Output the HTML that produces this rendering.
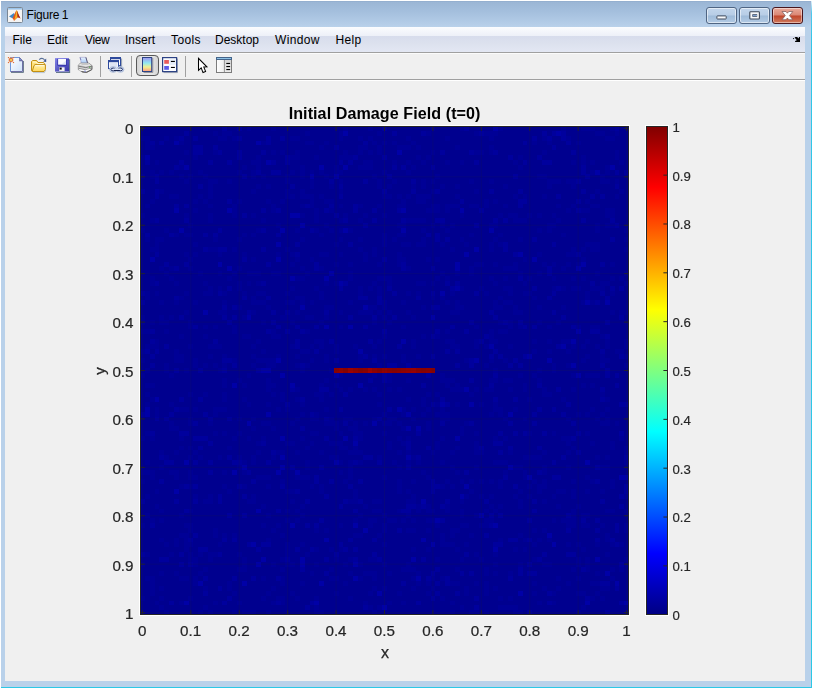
<!DOCTYPE html>
<html><head><meta charset="utf-8"><title>Figure 1</title>
<style>
html,body{margin:0;padding:0;background:#fff;}
body{width:813px;height:689px;position:relative;overflow:hidden;font-family:"Liberation Sans",sans-serif;}
.a{position:absolute;}
#frame{left:1px;top:1px;width:811px;height:687px;background:#b9d1ea;}
#cy-r{left:811px;top:1px;width:1px;height:687px;background:linear-gradient(#e4f1fa 0,#a8dcf2 5px,#4fc8ec 12px,#32c6e8 40px,#2cc8e6 100%);}
#cy-b{left:1px;top:687px;width:811px;height:1px;background:#2cc8e6;}
#title{left:1px;top:1px;width:810px;height:26px;background:linear-gradient(#8faacb 0,#9bb6d5 1.2px,#a4bfdd 40%,#b3cce7 85%,#b9d1ea 100%);}
#ttext{left:26.5px;top:6px;letter-spacing:-0.2px;word-spacing:-0.8px;font-size:12px;line-height:18px;color:#000;white-space:nowrap;}
#menu{left:5px;top:27px;width:800px;height:25px;background:linear-gradient(#fbfcfe 0,#edf0f8 9px,#d7dcec 9px,#dce1ee 16px,#e3e7f3 25px);}
.mi{position:absolute;top:31px;font-size:12px;line-height:18px;color:#000;white-space:nowrap;}
#l1{left:5px;top:52px;width:800px;height:1px;background:#a0a0a0;}
#tool{left:5px;top:53px;width:800px;height:26px;background:linear-gradient(#fbfbfb 0,#fbfbfb 1px,#f0f0f0 1px);}
#l2{left:5px;top:79px;width:800px;height:1px;background:#a0a0a0;}
#l3{left:5px;top:80px;width:800px;height:1px;background:#ffffff;}
#content{left:5px;top:81px;width:800px;height:600px;background:#f0f0f0;}
.btn{position:absolute;top:7px;height:17px;box-sizing:border-box;border:1px solid #4f6583;border-radius:3px;}
.xt{-webkit-text-stroke:0.22px #262626;position:absolute;top:622px;width:40px;text-align:center;font-size:15.2px;line-height:18px;color:#262626;}
.yt{-webkit-text-stroke:0.22px #262626;position:absolute;left:83.5px;width:50px;text-align:right;font-size:15.2px;line-height:18px;color:#262626;}
.ct{-webkit-text-stroke:0.18px #262626;position:absolute;left:672.5px;font-size:13.2px;line-height:16px;color:#262626;}
.sep{position:absolute;top:56px;width:1px;height:21px;background:#a0a0a0;}
</style></head><body>
<div class="a" id="frame"></div>
<div class="a" id="cy-r"></div>
<div class="a" id="cy-b"></div>
<div class="a" id="title"></div>

<!-- matlab icon -->
<svg class="a" style="left:7px;top:7px" width="16" height="16" viewBox="0 0 16 16">
<rect x="0.5" y="0.5" width="15" height="15" rx="1" fill="#f4f4f4" stroke="#7b8794"/>
<rect x="1" y="1" width="14" height="1.6" fill="#9cc4ea"/>
<path d="M2 9.5 L7 6 L8.5 9.8 L5.5 11.2z" fill="#3f86c4"/>
<path d="M5.5 11.2 L8 6 Q9.5 2.5 10.2 4 Q11.5 8 13.5 11.5 Q11.5 10 10.5 10.5 Q8.5 12 7 14 Q6.5 12 5.5 11.2z" fill="#e0561a"/>
<path d="M9.4 3.6 Q10 3 10.3 4.4 L10.6 9.8 Q9 11.5 7.2 13.6 Q8.6 9 9.4 3.6z" fill="#f6b01f"/>
<path d="M10.2 4 Q11.5 8 13.5 11.5 Q11.8 10.2 10.6 10.4z" fill="#a6281b"/>
</svg>
<div class="a" id="ttext">Figure 1</div>

<!-- caption buttons -->
<div class="btn" style="left:706px;width:31px;background:linear-gradient(#c3d6ec 0,#b7cde6 48%,#9fbbd9 52%,#b3cbe5 100%);box-shadow:inset 0 0 0 1px rgba(255,255,255,.55);"></div>
<div class="btn" style="left:739px;width:31px;background:linear-gradient(#c3d6ec 0,#b7cde6 48%,#9fbbd9 52%,#b3cbe5 100%);box-shadow:inset 0 0 0 1px rgba(255,255,255,.55);"></div>
<div class="btn" style="left:772px;width:31px;border-color:#48151c;background:linear-gradient(#e9aa9b 0,#da8674 48%,#c1452b 52%,#d07a5c 100%);box-shadow:inset 0 0 0 1px rgba(255,255,255,.45);"></div>
<svg class="a" style="left:706px;top:7px" width="97" height="17" viewBox="0 0 97 17">
<rect x="10.9" y="8.9" width="9.3" height="3.1" rx="0.6" fill="#f6f8fb" stroke="#414b5c" stroke-width="1"/>
<rect x="43.8" y="4.8" width="9.6" height="7.2" rx="0.8" fill="#f6f8fb" stroke="#3e4858" stroke-width="1.1"/>
<rect x="46.7" y="7.6" width="4.1" height="1.8" fill="#7c9fd0" stroke="#4c586a" stroke-width="0.8"/>
<path d="M76 4.5h4l1.4 1.7l1.4-1.7h4l-3.3 4.1l3.3 4.1h-4l-1.4-1.7l-1.4 1.7h-4l3.3-4.1z" fill="#ffffff" stroke="#7a5656" stroke-width="0.7" stroke-linejoin="round"/>
</svg>

<!-- menu -->
<div class="a" id="menu"></div>
<div class="mi" style="left:12.5px">File</div>
<div class="mi" style="left:47px">Edit</div>
<div class="mi" style="left:85px;letter-spacing:-0.4px">View</div>
<div class="mi" style="left:125px">Insert</div>
<div class="mi" style="left:171px;letter-spacing:0.4px">Tools</div>
<div class="mi" style="left:215px">Desktop</div>
<div class="mi" style="left:275px;letter-spacing:0.35px">Window</div>
<div class="mi" style="left:335.5px;letter-spacing:0.3px">Help</div>
<svg class="a" style="left:792px;top:36px" width="9" height="7" viewBox="792 36 9 7"><path d="M792.8 38.6L793.6 37.9L794.4 38.6L793.6 39.3z M794.6 37.6L795.6 36.9H797.2L798.5 38.4L799.1 37H800V42H795.1V41L796.8 40.2L795.6 38.7z" fill="#000"/></svg>
<div class="a" id="l1"></div>
<div class="a" id="tool"></div>
<div class="a" id="l2"></div>
<div class="a" id="l3"></div>
<div class="a" id="content"></div>

<!--TOOLBAR-->
<svg class="a" style="left:5px;top:53px" width="240" height="26" viewBox="5 53 240 26">
<defs>
<linearGradient id="pg" x1="0" y1="0" x2="1" y2="1"><stop offset="0" stop-color="#ffffff"/><stop offset="1" stop-color="#cfe2fa"/></linearGradient>
<linearGradient id="fo" x1="0" y1="0" x2="0" y2="1"><stop offset="0" stop-color="#fff3b0"/><stop offset="1" stop-color="#ffd65a"/></linearGradient>
<linearGradient id="fl" x1="0" y1="0" x2="1" y2="1"><stop offset="0" stop-color="#8484e6"/><stop offset="1" stop-color="#3434a8"/></linearGradient>
<linearGradient id="cbi" x1="0" y1="0" x2="0" y2="1"><stop offset="0" stop-color="#a094f2"/><stop offset="0.4" stop-color="#90e8f2"/><stop offset="0.68" stop-color="#f2f090"/><stop offset="1" stop-color="#ff9a80"/></linearGradient>
<linearGradient id="pp" x1="0" y1="0" x2="1" y2="0"><stop offset="0" stop-color="#ffffff"/><stop offset="1" stop-color="#dcdcdc"/></linearGradient>
<linearGradient id="ppr" x1="0" y1="0" x2="0" y2="1"><stop offset="0" stop-color="#e8f2ff"/><stop offset="1" stop-color="#a8ccf6"/></linearGradient>
<linearGradient id="pb" x1="0" y1="0" x2="0" y2="1"><stop offset="0" stop-color="#d4d4d4"/><stop offset="1" stop-color="#ececec"/></linearGradient>
<linearGradient id="prs" x1="0" y1="0" x2="1" y2="0"><stop offset="0" stop-color="#d2d2d2"/><stop offset="0.3" stop-color="#e6e6e6"/><stop offset="0.7" stop-color="#e6e6e6"/><stop offset="1" stop-color="#d2d2d2"/></linearGradient>
</defs>
<!-- new -->
<path d="M11 72.5H23.5V61" fill="none" stroke="#6f8090"/>
<path d="M10.5 57.5H19.5L22.5 60.8V71.5H10.5z" fill="url(#pg)" stroke="#6e6ea6"/>
<path d="M10.5 71.5V57.5H19.5" fill="none" stroke="#6f96da"/>
<path d="M19.2 57.3L23 61.2H19.2z" fill="#6868a2"/>
<circle cx="20.3" cy="59.6" r="0.6" fill="#7fa6e0"/>
<g fill="#e2703a"><circle cx="11" cy="59.9" r="2.7" fill="#f0a070" opacity="0.55"/><circle cx="11" cy="59.9" r="2.1"/>
<rect x="7.9" y="57" width="1.1" height="1.1"/><rect x="13" y="57" width="1.1" height="1.1"/><rect x="7.9" y="62" width="1.1" height="1.1"/><rect x="13" y="62" width="1.1" height="1.1"/></g>
<rect x="10.2" y="59.1" width="1.7" height="1.7" fill="#e8ee62"/>
<!-- open -->
<path d="M33 72.6H44.5L45.8 70" fill="none" stroke="#9fb0c4" stroke-opacity="0.7"/>
<path d="M31.5 70.8V61.5L32.8 60.5H36.6L38 62.5H43.6L44.5 63.6V66" fill="#ffe27a" stroke="#c28f12"/>
<path d="M32.6 62h3.6l1.3 1.6h5.8" fill="none" stroke="#fffbe8" stroke-width="0.9"/>
<path d="M32.2 71.5L34 65.5L35 64.6H45.4V69.5L44 71.5z" fill="url(#fo)" stroke="#c28f12" stroke-linejoin="round"/>
<path d="M35.2 65.7H44.3" stroke="#fffdf0" stroke-width="0.9" fill="none"/>
<path d="M39.2 59.6Q42 57 44.6 59.8" fill="none" stroke="#5a7098" stroke-width="1.1"/>
<path d="M43.2 61.6L46.2 58.6V61.9z" fill="#3c5690"/>
<!-- save -->
<path d="M56 72.5H69.6V59.2" fill="none" stroke="#64788c" stroke-width="1.1"/>
<rect x="55" y="58" width="14" height="13.6" fill="url(#fl)"/>
<rect x="55" y="58" width="14" height="0.8" fill="#9a9af0" opacity="0.7"/>
<rect x="58" y="59" width="8" height="5.8" fill="#fbfcff"/>
<path d="M66 60.5V64.8H61z" fill="#dfe8f6"/>
<rect x="57.3" y="58.8" width="0.8" height="6.4" fill="#3838b0"/><rect x="66" y="58.8" width="0.8" height="6.4" fill="#3838b0"/><rect x="57.6" y="64.8" width="9" height="0.9" fill="#3030a4"/>
<rect x="59.2" y="67.3" width="5.4" height="3.8" fill="#f4f4f4"/>
<rect x="59.6" y="67.6" width="2.1" height="2" fill="#101018"/>
<rect x="67.6" y="59.2" width="0.9" height="1.2" fill="#2c2c88"/>
<!-- print -->
<path d="M80.2 57.3H85.8L87.4 63H81.2z" fill="url(#ppr)" stroke="#8c8cc0" stroke-width="0.5"/>
<path d="M85.9 57.3L87.6 63" stroke="#505070" stroke-width="0.9" fill="none"/>
<path d="M80 57.4L80.9 60" stroke="#7070b0" stroke-width="0.8" fill="none"/>
<path d="M78.3 65.4L80.3 63.1H88.8L92 65.6V69.4L86.8 72.4H83L78.3 69.6z" fill="#c4c4c4" stroke="#8a8a8a" stroke-width="0.8"/>
<path d="M78.8 65L80.6 63.4H88.6L91.4 65.4L86 66.6z" fill="#e6e6e6"/>
<path d="M81.5 64.3H88.5" stroke="#b8b8b8" stroke-width="0.8" fill="none"/>
<path d="M78.6 66.2L85.8 67.6L91.8 66.2" fill="none" stroke="#7e7e7e" stroke-width="1"/>
<path d="M78.8 67.4L85.8 68.8L91.6 67.4" fill="none" stroke="#d6d6d6" stroke-width="0.9"/>
<path d="M78.8 68.4L85.4 69.8L91.6 68.2" fill="none" stroke="#8c8c8c" stroke-width="0.9"/>
<path d="M79.2 69.6L84.8 71L90.6 69.4" fill="none" stroke="#fbfbfb" stroke-width="1.3"/>
<path d="M81.6 71.6L86.6 72.3L91.8 69.6" fill="none" stroke="#565656" stroke-width="1"/>
<path d="M91.9 65.8V69.4" stroke="#6c6c6c" stroke-width="0.9" fill="none"/>
<rect x="89.2" y="66.6" width="1.1" height="1.3" fill="#4caa44"/>
<rect x="84.3" y="70.6" width="1.6" height="1" fill="#7c84d8"/>
<!-- link -->
<path d="M121.6 58.5V66.4H119.5" fill="none" stroke="#8a96a8" stroke-width="0.9"/>
<rect x="110.5" y="58" width="10" height="7.6" fill="#fdfdff" stroke="#2e4a9c"/>
<rect x="110" y="57" width="11" height="2.2" fill="#2e4a9c"/>
<rect x="108.5" y="61" width="10" height="7.6" fill="#f4f7fd" stroke="#2e4a9c"/>
<rect x="108" y="60" width="11" height="2.2" fill="#2e4a9c"/>
<rect x="110" y="63" width="7" height="4" fill="#dfe6f4"/>
<ellipse cx="113.2" cy="69.5" rx="3.7" ry="2.9" fill="#c9d6ec" stroke="#93a5c6" stroke-width="0.5"/>
<ellipse cx="120.3" cy="69.4" rx="3.7" ry="2.9" fill="#c9d6ec" stroke="#93a5c6" stroke-width="0.5"/>
<ellipse cx="113.2" cy="69.5" rx="2.2" ry="1.4" fill="#dfe8f8" stroke="#1e2c60" stroke-width="1"/>
<ellipse cx="120.3" cy="69.4" rx="2.2" ry="1.4" fill="#dfe8f8" stroke="#1e2c60" stroke-width="1"/>
<rect x="113.6" y="68.5" width="6.2" height="1.5" fill="#e4edfc"/>
<path d="M114 70.5H119.6" stroke="#16224c" stroke-width="1.1"/>
<!-- colorbar pressed button -->
<rect x="136.5" y="55.5" width="22" height="20" rx="3.6" fill="url(#prs)" stroke="#585858"/>
<path d="M143.5 72.5H152.8V58" fill="none" stroke="#8c8c94" stroke-width="0.9"/>
<rect x="142.5" y="57.5" width="9.2" height="14" fill="url(#cbi)" stroke="#2c4284"/>
<!-- legend -->
<path d="M163.5 72.6H177.5V58.5" fill="none" stroke="#9aa2b0" stroke-width="0.9"/>
<rect x="162.6" y="57.6" width="14" height="14" fill="#fbfcff" stroke="#2c4284" stroke-width="1.2"/>
<rect x="169.5" y="59.5" width="6" height="5.4" fill="#e4ecf8"/>
<rect x="164.2" y="60" width="4.7" height="3.8" fill="#e85c5c"/>
<rect x="164.2" y="66" width="4.7" height="3.8" fill="#5c5ce8"/>
<rect x="170.9" y="60.9" width="4" height="1.1" fill="#000"/>
<rect x="170.9" y="66.9" width="4" height="1.1" fill="#000"/>
<!-- cursor -->
<path d="M198.5 58.3V70.4L201.2 67.9L203 72.6L205.6 71.4L203.8 67.1L206.9 66.9z" fill="#fff" stroke="#000" stroke-width="1.05" stroke-linejoin="miter"/>
<!-- property -->
<rect x="216.5" y="57.5" width="15" height="15" fill="url(#pp)" stroke="#7c7c7c"/>
<rect x="224.8" y="59.5" width="6.2" height="12.5" fill="url(#pb)"/>
<path d="M224.4 59.5V72" stroke="#8a8a8a" stroke-width="0.9"/>
<rect x="216.5" y="57.5" width="15" height="2" fill="#8ec2e6" stroke="#44648a"/>
<rect x="226.3" y="62.9" width="3.8" height="1.1" fill="#000"/><rect x="226.3" y="66" width="3.8" height="1.1" fill="#000"/><rect x="226.3" y="69" width="3.8" height="1.1" fill="#000"/>
</svg>
<div class="sep" style="left:100px"></div><div class="sep" style="left:131px"></div><div class="sep" style="left:185px"></div>

<!--/TOOLBAR-->

<!-- plot -->
<div class="a" id="plot" style="left:0;top:0;width:813px;height:689px;will-change:transform;">
<div class="a" style="left:184.6px;top:103.2px;width:400px;text-align:center;font-weight:bold;letter-spacing:0.06px;font-size:16.13px;line-height:20px;color:#000;white-space:nowrap;">Initial Damage Field (t=0)</div>
<svg class="a" style="left:139px;top:125px" width="491" height="491" viewBox="-1 -1 491 491">
<g shape-rendering="crispEdges">
<rect x="-1" y="-1" width="491" height="491" fill="#ffffff"/>
<rect x="0" y="0" width="489" height="489" fill="#00008f"/>
<path fill="#000096" d="M62.9 0h4.9v4.9h-4.9zM106.5 0h4.9v4.9h-4.9zM130.7 0h4.9v4.9h-4.9zM203.3 0h4.9v4.9h-4.9zM227.6 0h4.9v4.9h-4.9zM290.5 0h4.9v4.9h-4.9zM319.5 0h4.9v4.9h-4.9zM358.3 0h4.9v4.9h-4.9zM421.2 0h4.9v4.9h-4.9zM440.6 0h4.9v4.9h-4.9zM445.4 0h4.9v4.9h-4.9zM450.3 0h4.9v4.9h-4.9zM469.6 0h4.9v4.9h-4.9zM72.6 4.8h4.9v4.9h-4.9zM82.3 4.8h4.9v4.9h-4.9zM87.1 4.8h4.9v4.9h-4.9zM164.6 4.8h4.9v4.9h-4.9zM198.5 4.8h4.9v4.9h-4.9zM237.2 4.8h4.9v4.9h-4.9zM285.7 4.8h4.9v4.9h-4.9zM334.1 4.8h4.9v4.9h-4.9zM343.8 4.8h4.9v4.9h-4.9zM348.6 4.8h4.9v4.9h-4.9zM353.4 4.8h4.9v4.9h-4.9zM455.1 4.8h4.9v4.9h-4.9zM460 4.8h4.9v4.9h-4.9zM474.5 4.8h4.9v4.9h-4.9zM0 9.7h4.9v4.9h-4.9zM4.8 9.7h4.9v4.9h-4.9zM24.2 9.7h4.9v4.9h-4.9zM33.9 9.7h4.9v4.9h-4.9zM77.5 9.7h4.9v4.9h-4.9zM82.3 9.7h4.9v4.9h-4.9zM92 9.7h4.9v4.9h-4.9zM150.1 9.7h4.9v4.9h-4.9zM154.9 9.7h4.9v4.9h-4.9zM198.5 9.7h4.9v4.9h-4.9zM217.9 9.7h4.9v4.9h-4.9zM227.6 9.7h4.9v4.9h-4.9zM266.3 9.7h4.9v4.9h-4.9zM305 9.7h4.9v4.9h-4.9zM348.6 9.7h4.9v4.9h-4.9zM401.9 9.7h4.9v4.9h-4.9zM426.1 9.7h4.9v4.9h-4.9zM464.8 9.7h4.9v4.9h-4.9zM469.6 9.7h4.9v4.9h-4.9zM4.8 14.5h4.9v4.9h-4.9zM38.7 14.5h4.9v4.9h-4.9zM121 14.5h4.9v4.9h-4.9zM164.6 14.5h4.9v4.9h-4.9zM169.5 14.5h4.9v4.9h-4.9zM184 14.5h4.9v4.9h-4.9zM232.4 14.5h4.9v4.9h-4.9zM242.1 14.5h4.9v4.9h-4.9zM251.8 14.5h4.9v4.9h-4.9zM271.1 14.5h4.9v4.9h-4.9zM392.2 14.5h4.9v4.9h-4.9zM406.7 14.5h4.9v4.9h-4.9zM435.7 14.5h4.9v4.9h-4.9zM4.8 19.4h4.9v4.9h-4.9zM9.7 19.4h4.9v4.9h-4.9zM179.1 19.4h4.9v4.9h-4.9zM217.9 19.4h4.9v4.9h-4.9zM222.7 19.4h4.9v4.9h-4.9zM237.2 19.4h4.9v4.9h-4.9zM256.6 19.4h4.9v4.9h-4.9zM261.4 19.4h4.9v4.9h-4.9zM266.3 19.4h4.9v4.9h-4.9zM276 19.4h4.9v4.9h-4.9zM314.7 19.4h4.9v4.9h-4.9zM348.6 19.4h4.9v4.9h-4.9zM43.6 24.2h4.9v4.9h-4.9zM72.6 24.2h4.9v4.9h-4.9zM130.7 24.2h4.9v4.9h-4.9zM140.4 24.2h4.9v4.9h-4.9zM154.9 24.2h4.9v4.9h-4.9zM203.3 24.2h4.9v4.9h-4.9zM217.9 24.2h4.9v4.9h-4.9zM227.6 24.2h4.9v4.9h-4.9zM237.2 24.2h4.9v4.9h-4.9zM290.5 24.2h4.9v4.9h-4.9zM334.1 24.2h4.9v4.9h-4.9zM338.9 24.2h4.9v4.9h-4.9zM348.6 24.2h4.9v4.9h-4.9zM401.9 24.2h4.9v4.9h-4.9zM474.5 24.2h4.9v4.9h-4.9zM0 29h4.9v4.9h-4.9zM53.3 29h4.9v4.9h-4.9zM116.2 29h4.9v4.9h-4.9zM150.1 29h4.9v4.9h-4.9zM154.9 29h4.9v4.9h-4.9zM174.3 29h4.9v4.9h-4.9zM198.5 29h4.9v4.9h-4.9zM203.3 29h4.9v4.9h-4.9zM208.2 29h4.9v4.9h-4.9zM276 29h4.9v4.9h-4.9zM285.7 29h4.9v4.9h-4.9zM377.6 29h4.9v4.9h-4.9zM440.6 29h4.9v4.9h-4.9zM474.5 29h4.9v4.9h-4.9zM14.5 33.9h4.9v4.9h-4.9zM111.4 33.9h4.9v4.9h-4.9zM116.2 33.9h4.9v4.9h-4.9zM222.7 33.9h4.9v4.9h-4.9zM227.6 33.9h4.9v4.9h-4.9zM251.8 33.9h4.9v4.9h-4.9zM266.3 33.9h4.9v4.9h-4.9zM280.8 33.9h4.9v4.9h-4.9zM305 33.9h4.9v4.9h-4.9zM319.5 33.9h4.9v4.9h-4.9zM372.8 33.9h4.9v4.9h-4.9zM430.9 33.9h4.9v4.9h-4.9zM440.6 33.9h4.9v4.9h-4.9zM450.3 33.9h4.9v4.9h-4.9zM479.3 33.9h4.9v4.9h-4.9zM38.7 38.7h4.9v4.9h-4.9zM101.7 38.7h4.9v4.9h-4.9zM116.2 38.7h4.9v4.9h-4.9zM159.8 38.7h4.9v4.9h-4.9zM193.7 38.7h4.9v4.9h-4.9zM217.9 38.7h4.9v4.9h-4.9zM222.7 38.7h4.9v4.9h-4.9zM227.6 38.7h4.9v4.9h-4.9zM271.1 38.7h4.9v4.9h-4.9zM377.6 38.7h4.9v4.9h-4.9zM464.8 38.7h4.9v4.9h-4.9zM9.7 43.6h4.9v4.9h-4.9zM19.4 43.6h4.9v4.9h-4.9zM29 43.6h4.9v4.9h-4.9zM58.1 43.6h4.9v4.9h-4.9zM96.8 43.6h4.9v4.9h-4.9zM111.4 43.6h4.9v4.9h-4.9zM150.1 43.6h4.9v4.9h-4.9zM159.8 43.6h4.9v4.9h-4.9zM169.5 43.6h4.9v4.9h-4.9zM179.1 43.6h4.9v4.9h-4.9zM193.7 43.6h4.9v4.9h-4.9zM198.5 43.6h4.9v4.9h-4.9zM242.1 43.6h4.9v4.9h-4.9zM266.3 43.6h4.9v4.9h-4.9zM450.3 43.6h4.9v4.9h-4.9zM464.8 43.6h4.9v4.9h-4.9zM0 48.4h4.9v4.9h-4.9zM9.7 48.4h4.9v4.9h-4.9zM38.7 48.4h4.9v4.9h-4.9zM48.4 48.4h4.9v4.9h-4.9zM62.9 48.4h4.9v4.9h-4.9zM111.4 48.4h4.9v4.9h-4.9zM121 48.4h4.9v4.9h-4.9zM145.2 48.4h4.9v4.9h-4.9zM159.8 48.4h4.9v4.9h-4.9zM184 48.4h4.9v4.9h-4.9zM232.4 48.4h4.9v4.9h-4.9zM295.3 48.4h4.9v4.9h-4.9zM397 48.4h4.9v4.9h-4.9zM401.9 48.4h4.9v4.9h-4.9zM460 48.4h4.9v4.9h-4.9zM43.6 53.3h4.9v4.9h-4.9zM67.8 53.3h4.9v4.9h-4.9zM72.6 53.3h4.9v4.9h-4.9zM87.1 53.3h4.9v4.9h-4.9zM145.2 53.3h4.9v4.9h-4.9zM169.5 53.3h4.9v4.9h-4.9zM198.5 53.3h4.9v4.9h-4.9zM237.2 53.3h4.9v4.9h-4.9zM251.8 53.3h4.9v4.9h-4.9zM280.8 53.3h4.9v4.9h-4.9zM290.5 53.3h4.9v4.9h-4.9zM329.2 53.3h4.9v4.9h-4.9zM348.6 53.3h4.9v4.9h-4.9zM406.7 53.3h4.9v4.9h-4.9zM411.5 53.3h4.9v4.9h-4.9zM416.4 53.3h4.9v4.9h-4.9zM426.1 53.3h4.9v4.9h-4.9zM430.9 53.3h4.9v4.9h-4.9zM460 53.3h4.9v4.9h-4.9zM464.8 53.3h4.9v4.9h-4.9zM474.5 53.3h4.9v4.9h-4.9zM67.8 58.1h4.9v4.9h-4.9zM116.2 58.1h4.9v4.9h-4.9zM125.9 58.1h4.9v4.9h-4.9zM169.5 58.1h4.9v4.9h-4.9zM188.8 58.1h4.9v4.9h-4.9zM237.2 58.1h4.9v4.9h-4.9zM246.9 58.1h4.9v4.9h-4.9zM271.1 58.1h4.9v4.9h-4.9zM280.8 58.1h4.9v4.9h-4.9zM300.2 58.1h4.9v4.9h-4.9zM314.7 58.1h4.9v4.9h-4.9zM363.1 58.1h4.9v4.9h-4.9zM406.7 58.1h4.9v4.9h-4.9zM430.9 58.1h4.9v4.9h-4.9zM19.4 62.9h4.9v4.9h-4.9zM67.8 62.9h4.9v4.9h-4.9zM111.4 62.9h4.9v4.9h-4.9zM145.2 62.9h4.9v4.9h-4.9zM159.8 62.9h4.9v4.9h-4.9zM198.5 62.9h4.9v4.9h-4.9zM290.5 62.9h4.9v4.9h-4.9zM334.1 62.9h4.9v4.9h-4.9zM455.1 62.9h4.9v4.9h-4.9zM479.3 62.9h4.9v4.9h-4.9zM29 67.8h4.9v4.9h-4.9zM33.9 67.8h4.9v4.9h-4.9zM58.1 67.8h4.9v4.9h-4.9zM67.8 67.8h4.9v4.9h-4.9zM145.2 67.8h4.9v4.9h-4.9zM150.1 67.8h4.9v4.9h-4.9zM159.8 67.8h4.9v4.9h-4.9zM164.6 67.8h4.9v4.9h-4.9zM169.5 67.8h4.9v4.9h-4.9zM179.1 67.8h4.9v4.9h-4.9zM242.1 67.8h4.9v4.9h-4.9zM246.9 67.8h4.9v4.9h-4.9zM256.6 67.8h4.9v4.9h-4.9zM266.3 67.8h4.9v4.9h-4.9zM276 67.8h4.9v4.9h-4.9zM280.8 67.8h4.9v4.9h-4.9zM285.7 67.8h4.9v4.9h-4.9zM314.7 67.8h4.9v4.9h-4.9zM372.8 67.8h4.9v4.9h-4.9zM382.5 67.8h4.9v4.9h-4.9zM401.9 67.8h4.9v4.9h-4.9zM474.5 67.8h4.9v4.9h-4.9zM9.7 72.6h4.9v4.9h-4.9zM53.3 72.6h4.9v4.9h-4.9zM62.9 72.6h4.9v4.9h-4.9zM96.8 72.6h4.9v4.9h-4.9zM125.9 72.6h4.9v4.9h-4.9zM140.4 72.6h4.9v4.9h-4.9zM169.5 72.6h4.9v4.9h-4.9zM184 72.6h4.9v4.9h-4.9zM188.8 72.6h4.9v4.9h-4.9zM261.4 72.6h4.9v4.9h-4.9zM276 72.6h4.9v4.9h-4.9zM280.8 72.6h4.9v4.9h-4.9zM343.8 72.6h4.9v4.9h-4.9zM353.4 72.6h4.9v4.9h-4.9zM445.4 72.6h4.9v4.9h-4.9zM4.8 77.5h4.9v4.9h-4.9zM67.8 77.5h4.9v4.9h-4.9zM92 77.5h4.9v4.9h-4.9zM130.7 77.5h4.9v4.9h-4.9zM159.8 77.5h4.9v4.9h-4.9zM169.5 77.5h4.9v4.9h-4.9zM198.5 77.5h4.9v4.9h-4.9zM217.9 77.5h4.9v4.9h-4.9zM237.2 77.5h4.9v4.9h-4.9zM256.6 77.5h4.9v4.9h-4.9zM261.4 77.5h4.9v4.9h-4.9zM290.5 77.5h4.9v4.9h-4.9zM295.3 77.5h4.9v4.9h-4.9zM305 77.5h4.9v4.9h-4.9zM309.9 77.5h4.9v4.9h-4.9zM314.7 77.5h4.9v4.9h-4.9zM329.2 77.5h4.9v4.9h-4.9zM334.1 77.5h4.9v4.9h-4.9zM343.8 77.5h4.9v4.9h-4.9zM363.1 77.5h4.9v4.9h-4.9zM416.4 77.5h4.9v4.9h-4.9zM430.9 77.5h4.9v4.9h-4.9zM450.3 77.5h4.9v4.9h-4.9zM455.1 77.5h4.9v4.9h-4.9zM53.3 82.3h4.9v4.9h-4.9zM92 82.3h4.9v4.9h-4.9zM130.7 82.3h4.9v4.9h-4.9zM174.3 82.3h4.9v4.9h-4.9zM188.8 82.3h4.9v4.9h-4.9zM285.7 82.3h4.9v4.9h-4.9zM290.5 82.3h4.9v4.9h-4.9zM295.3 82.3h4.9v4.9h-4.9zM305 82.3h4.9v4.9h-4.9zM426.1 82.3h4.9v4.9h-4.9zM440.6 82.3h4.9v4.9h-4.9zM445.4 82.3h4.9v4.9h-4.9zM464.8 82.3h4.9v4.9h-4.9zM469.6 82.3h4.9v4.9h-4.9zM0 87.1h4.9v4.9h-4.9zM43.6 87.1h4.9v4.9h-4.9zM67.8 87.1h4.9v4.9h-4.9zM92 87.1h4.9v4.9h-4.9zM111.4 87.1h4.9v4.9h-4.9zM159.8 87.1h4.9v4.9h-4.9zM174.3 87.1h4.9v4.9h-4.9zM203.3 87.1h4.9v4.9h-4.9zM222.7 87.1h4.9v4.9h-4.9zM242.1 87.1h4.9v4.9h-4.9zM319.5 87.1h4.9v4.9h-4.9zM358.3 87.1h4.9v4.9h-4.9zM368 87.1h4.9v4.9h-4.9zM372.8 87.1h4.9v4.9h-4.9zM387.3 87.1h4.9v4.9h-4.9zM397 87.1h4.9v4.9h-4.9zM411.5 87.1h4.9v4.9h-4.9zM464.8 87.1h4.9v4.9h-4.9zM469.6 87.1h4.9v4.9h-4.9zM9.7 92h4.9v4.9h-4.9zM67.8 92h4.9v4.9h-4.9zM121 92h4.9v4.9h-4.9zM174.3 92h4.9v4.9h-4.9zM198.5 92h4.9v4.9h-4.9zM217.9 92h4.9v4.9h-4.9zM266.3 92h4.9v4.9h-4.9zM271.1 92h4.9v4.9h-4.9zM276 92h4.9v4.9h-4.9zM280.8 92h4.9v4.9h-4.9zM372.8 92h4.9v4.9h-4.9zM377.6 92h4.9v4.9h-4.9zM382.5 92h4.9v4.9h-4.9zM416.4 92h4.9v4.9h-4.9zM48.4 96.8h4.9v4.9h-4.9zM135.6 96.8h4.9v4.9h-4.9zM184 96.8h4.9v4.9h-4.9zM256.6 96.8h4.9v4.9h-4.9zM261.4 96.8h4.9v4.9h-4.9zM290.5 96.8h4.9v4.9h-4.9zM300.2 96.8h4.9v4.9h-4.9zM309.9 96.8h4.9v4.9h-4.9zM348.6 96.8h4.9v4.9h-4.9zM353.4 96.8h4.9v4.9h-4.9zM406.7 96.8h4.9v4.9h-4.9zM411.5 96.8h4.9v4.9h-4.9zM455.1 96.8h4.9v4.9h-4.9zM464.8 96.8h4.9v4.9h-4.9zM469.6 96.8h4.9v4.9h-4.9zM0 101.7h4.9v4.9h-4.9zM24.2 101.7h4.9v4.9h-4.9zM116.2 101.7h4.9v4.9h-4.9zM154.9 101.7h4.9v4.9h-4.9zM174.3 101.7h4.9v4.9h-4.9zM188.8 101.7h4.9v4.9h-4.9zM198.5 101.7h4.9v4.9h-4.9zM208.2 101.7h4.9v4.9h-4.9zM280.8 101.7h4.9v4.9h-4.9zM305 101.7h4.9v4.9h-4.9zM397 101.7h4.9v4.9h-4.9zM406.7 101.7h4.9v4.9h-4.9zM455.1 101.7h4.9v4.9h-4.9zM484.2 101.7h4.9v4.9h-4.9zM33.9 106.5h4.9v4.9h-4.9zM43.6 106.5h4.9v4.9h-4.9zM48.4 106.5h4.9v4.9h-4.9zM101.7 106.5h4.9v4.9h-4.9zM111.4 106.5h4.9v4.9h-4.9zM179.1 106.5h4.9v4.9h-4.9zM242.1 106.5h4.9v4.9h-4.9zM256.6 106.5h4.9v4.9h-4.9zM261.4 106.5h4.9v4.9h-4.9zM329.2 106.5h4.9v4.9h-4.9zM358.3 106.5h4.9v4.9h-4.9zM421.2 106.5h4.9v4.9h-4.9zM4.8 111.4h4.9v4.9h-4.9zM14.5 111.4h4.9v4.9h-4.9zM19.4 111.4h4.9v4.9h-4.9zM72.6 111.4h4.9v4.9h-4.9zM96.8 111.4h4.9v4.9h-4.9zM159.8 111.4h4.9v4.9h-4.9zM198.5 111.4h4.9v4.9h-4.9zM217.9 111.4h4.9v4.9h-4.9zM242.1 111.4h4.9v4.9h-4.9zM251.8 111.4h4.9v4.9h-4.9zM280.8 111.4h4.9v4.9h-4.9zM319.5 111.4h4.9v4.9h-4.9zM353.4 111.4h4.9v4.9h-4.9zM377.6 111.4h4.9v4.9h-4.9zM484.2 111.4h4.9v4.9h-4.9zM14.5 116.2h4.9v4.9h-4.9zM53.3 116.2h4.9v4.9h-4.9zM193.7 116.2h4.9v4.9h-4.9zM242.1 116.2h4.9v4.9h-4.9zM261.4 116.2h4.9v4.9h-4.9zM266.3 116.2h4.9v4.9h-4.9zM276 116.2h4.9v4.9h-4.9zM280.8 116.2h4.9v4.9h-4.9zM300.2 116.2h4.9v4.9h-4.9zM324.4 116.2h4.9v4.9h-4.9zM348.6 116.2h4.9v4.9h-4.9zM358.3 116.2h4.9v4.9h-4.9zM445.4 116.2h4.9v4.9h-4.9zM450.3 116.2h4.9v4.9h-4.9zM455.1 116.2h4.9v4.9h-4.9zM9.7 121h4.9v4.9h-4.9zM14.5 121h4.9v4.9h-4.9zM67.8 121h4.9v4.9h-4.9zM72.6 121h4.9v4.9h-4.9zM92 121h4.9v4.9h-4.9zM145.2 121h4.9v4.9h-4.9zM217.9 121h4.9v4.9h-4.9zM232.4 121h4.9v4.9h-4.9zM309.9 121h4.9v4.9h-4.9zM348.6 121h4.9v4.9h-4.9zM430.9 121h4.9v4.9h-4.9zM440.6 121h4.9v4.9h-4.9zM450.3 121h4.9v4.9h-4.9zM455.1 121h4.9v4.9h-4.9zM484.2 121h4.9v4.9h-4.9zM43.6 125.9h4.9v4.9h-4.9zM53.3 125.9h4.9v4.9h-4.9zM77.5 125.9h4.9v4.9h-4.9zM101.7 125.9h4.9v4.9h-4.9zM135.6 125.9h4.9v4.9h-4.9zM150.1 125.9h4.9v4.9h-4.9zM179.1 125.9h4.9v4.9h-4.9zM184 125.9h4.9v4.9h-4.9zM198.5 125.9h4.9v4.9h-4.9zM222.7 125.9h4.9v4.9h-4.9zM232.4 125.9h4.9v4.9h-4.9zM256.6 125.9h4.9v4.9h-4.9zM397 125.9h4.9v4.9h-4.9zM426.1 125.9h4.9v4.9h-4.9zM430.9 125.9h4.9v4.9h-4.9zM48.4 130.7h4.9v4.9h-4.9zM111.4 130.7h4.9v4.9h-4.9zM154.9 130.7h4.9v4.9h-4.9zM169.5 130.7h4.9v4.9h-4.9zM222.7 130.7h4.9v4.9h-4.9zM256.6 130.7h4.9v4.9h-4.9zM261.4 130.7h4.9v4.9h-4.9zM285.7 130.7h4.9v4.9h-4.9zM295.3 130.7h4.9v4.9h-4.9zM382.5 130.7h4.9v4.9h-4.9zM440.6 130.7h4.9v4.9h-4.9zM150.1 135.6h4.9v4.9h-4.9zM193.7 135.6h4.9v4.9h-4.9zM208.2 135.6h4.9v4.9h-4.9zM237.2 135.6h4.9v4.9h-4.9zM256.6 135.6h4.9v4.9h-4.9zM334.1 135.6h4.9v4.9h-4.9zM338.9 135.6h4.9v4.9h-4.9zM353.4 135.6h4.9v4.9h-4.9zM372.8 135.6h4.9v4.9h-4.9zM401.9 135.6h4.9v4.9h-4.9zM411.5 135.6h4.9v4.9h-4.9zM426.1 135.6h4.9v4.9h-4.9zM435.7 135.6h4.9v4.9h-4.9zM469.6 135.6h4.9v4.9h-4.9zM19.4 140.4h4.9v4.9h-4.9zM29 140.4h4.9v4.9h-4.9zM48.4 140.4h4.9v4.9h-4.9zM96.8 140.4h4.9v4.9h-4.9zM159.8 140.4h4.9v4.9h-4.9zM179.1 140.4h4.9v4.9h-4.9zM266.3 140.4h4.9v4.9h-4.9zM329.2 140.4h4.9v4.9h-4.9zM363.1 140.4h4.9v4.9h-4.9zM368 140.4h4.9v4.9h-4.9zM372.8 140.4h4.9v4.9h-4.9zM421.2 140.4h4.9v4.9h-4.9zM24.2 145.2h4.9v4.9h-4.9zM58.1 145.2h4.9v4.9h-4.9zM77.5 145.2h4.9v4.9h-4.9zM92 145.2h4.9v4.9h-4.9zM106.5 145.2h4.9v4.9h-4.9zM111.4 145.2h4.9v4.9h-4.9zM116.2 145.2h4.9v4.9h-4.9zM130.7 145.2h4.9v4.9h-4.9zM135.6 145.2h4.9v4.9h-4.9zM164.6 145.2h4.9v4.9h-4.9zM208.2 145.2h4.9v4.9h-4.9zM300.2 145.2h4.9v4.9h-4.9zM314.7 145.2h4.9v4.9h-4.9zM329.2 145.2h4.9v4.9h-4.9zM377.6 145.2h4.9v4.9h-4.9zM397 145.2h4.9v4.9h-4.9zM455.1 145.2h4.9v4.9h-4.9zM484.2 145.2h4.9v4.9h-4.9zM9.7 150.1h4.9v4.9h-4.9zM29 150.1h4.9v4.9h-4.9zM87.1 150.1h4.9v4.9h-4.9zM154.9 150.1h4.9v4.9h-4.9zM159.8 150.1h4.9v4.9h-4.9zM208.2 150.1h4.9v4.9h-4.9zM237.2 150.1h4.9v4.9h-4.9zM242.1 150.1h4.9v4.9h-4.9zM246.9 150.1h4.9v4.9h-4.9zM295.3 150.1h4.9v4.9h-4.9zM305 150.1h4.9v4.9h-4.9zM348.6 150.1h4.9v4.9h-4.9zM363.1 150.1h4.9v4.9h-4.9zM387.3 150.1h4.9v4.9h-4.9zM411.5 150.1h4.9v4.9h-4.9zM430.9 150.1h4.9v4.9h-4.9zM440.6 150.1h4.9v4.9h-4.9zM469.6 150.1h4.9v4.9h-4.9zM479.3 150.1h4.9v4.9h-4.9zM9.7 154.9h4.9v4.9h-4.9zM33.9 154.9h4.9v4.9h-4.9zM62.9 154.9h4.9v4.9h-4.9zM96.8 154.9h4.9v4.9h-4.9zM106.5 154.9h4.9v4.9h-4.9zM116.2 154.9h4.9v4.9h-4.9zM184 154.9h4.9v4.9h-4.9zM193.7 154.9h4.9v4.9h-4.9zM232.4 154.9h4.9v4.9h-4.9zM246.9 154.9h4.9v4.9h-4.9zM276 154.9h4.9v4.9h-4.9zM280.8 154.9h4.9v4.9h-4.9zM290.5 154.9h4.9v4.9h-4.9zM353.4 154.9h4.9v4.9h-4.9zM382.5 154.9h4.9v4.9h-4.9zM460 154.9h4.9v4.9h-4.9zM464.8 154.9h4.9v4.9h-4.9zM484.2 154.9h4.9v4.9h-4.9zM67.8 159.8h4.9v4.9h-4.9zM77.5 159.8h4.9v4.9h-4.9zM96.8 159.8h4.9v4.9h-4.9zM150.1 159.8h4.9v4.9h-4.9zM174.3 159.8h4.9v4.9h-4.9zM217.9 159.8h4.9v4.9h-4.9zM227.6 159.8h4.9v4.9h-4.9zM237.2 159.8h4.9v4.9h-4.9zM319.5 159.8h4.9v4.9h-4.9zM338.9 159.8h4.9v4.9h-4.9zM363.1 159.8h4.9v4.9h-4.9zM368 159.8h4.9v4.9h-4.9zM411.5 159.8h4.9v4.9h-4.9zM421.2 159.8h4.9v4.9h-4.9zM430.9 159.8h4.9v4.9h-4.9zM435.7 159.8h4.9v4.9h-4.9zM450.3 159.8h4.9v4.9h-4.9zM455.1 159.8h4.9v4.9h-4.9zM460 159.8h4.9v4.9h-4.9zM4.8 164.6h4.9v4.9h-4.9zM14.5 164.6h4.9v4.9h-4.9zM43.6 164.6h4.9v4.9h-4.9zM62.9 164.6h4.9v4.9h-4.9zM67.8 164.6h4.9v4.9h-4.9zM82.3 164.6h4.9v4.9h-4.9zM101.7 164.6h4.9v4.9h-4.9zM116.2 164.6h4.9v4.9h-4.9zM121 164.6h4.9v4.9h-4.9zM145.2 164.6h4.9v4.9h-4.9zM179.1 164.6h4.9v4.9h-4.9zM217.9 164.6h4.9v4.9h-4.9zM237.2 164.6h4.9v4.9h-4.9zM266.3 164.6h4.9v4.9h-4.9zM276 164.6h4.9v4.9h-4.9zM309.9 164.6h4.9v4.9h-4.9zM343.8 164.6h4.9v4.9h-4.9zM368 164.6h4.9v4.9h-4.9zM382.5 164.6h4.9v4.9h-4.9zM387.3 164.6h4.9v4.9h-4.9zM445.4 164.6h4.9v4.9h-4.9zM469.6 164.6h4.9v4.9h-4.9zM4.8 169.5h4.9v4.9h-4.9zM38.7 169.5h4.9v4.9h-4.9zM111.4 169.5h4.9v4.9h-4.9zM154.9 169.5h4.9v4.9h-4.9zM159.8 169.5h4.9v4.9h-4.9zM179.1 169.5h4.9v4.9h-4.9zM290.5 169.5h4.9v4.9h-4.9zM300.2 169.5h4.9v4.9h-4.9zM358.3 169.5h4.9v4.9h-4.9zM392.2 169.5h4.9v4.9h-4.9zM445.4 169.5h4.9v4.9h-4.9zM19.4 174.3h4.9v4.9h-4.9zM33.9 174.3h4.9v4.9h-4.9zM53.3 174.3h4.9v4.9h-4.9zM82.3 174.3h4.9v4.9h-4.9zM111.4 174.3h4.9v4.9h-4.9zM116.2 174.3h4.9v4.9h-4.9zM121 174.3h4.9v4.9h-4.9zM145.2 174.3h4.9v4.9h-4.9zM150.1 174.3h4.9v4.9h-4.9zM159.8 174.3h4.9v4.9h-4.9zM169.5 174.3h4.9v4.9h-4.9zM208.2 174.3h4.9v4.9h-4.9zM242.1 174.3h4.9v4.9h-4.9zM261.4 174.3h4.9v4.9h-4.9zM305 174.3h4.9v4.9h-4.9zM314.7 174.3h4.9v4.9h-4.9zM353.4 174.3h4.9v4.9h-4.9zM363.1 174.3h4.9v4.9h-4.9zM368 174.3h4.9v4.9h-4.9zM440.6 174.3h4.9v4.9h-4.9zM450.3 174.3h4.9v4.9h-4.9zM96.8 179.1h4.9v4.9h-4.9zM125.9 179.1h4.9v4.9h-4.9zM184 179.1h4.9v4.9h-4.9zM188.8 179.1h4.9v4.9h-4.9zM227.6 179.1h4.9v4.9h-4.9zM232.4 179.1h4.9v4.9h-4.9zM242.1 179.1h4.9v4.9h-4.9zM280.8 179.1h4.9v4.9h-4.9zM314.7 179.1h4.9v4.9h-4.9zM319.5 179.1h4.9v4.9h-4.9zM353.4 179.1h4.9v4.9h-4.9zM358.3 179.1h4.9v4.9h-4.9zM372.8 179.1h4.9v4.9h-4.9zM397 179.1h4.9v4.9h-4.9zM421.2 179.1h4.9v4.9h-4.9zM43.6 184h4.9v4.9h-4.9zM77.5 184h4.9v4.9h-4.9zM82.3 184h4.9v4.9h-4.9zM111.4 184h4.9v4.9h-4.9zM154.9 184h4.9v4.9h-4.9zM198.5 184h4.9v4.9h-4.9zM217.9 184h4.9v4.9h-4.9zM222.7 184h4.9v4.9h-4.9zM227.6 184h4.9v4.9h-4.9zM237.2 184h4.9v4.9h-4.9zM246.9 184h4.9v4.9h-4.9zM266.3 184h4.9v4.9h-4.9zM309.9 184h4.9v4.9h-4.9zM314.7 184h4.9v4.9h-4.9zM372.8 184h4.9v4.9h-4.9zM377.6 184h4.9v4.9h-4.9zM469.6 184h4.9v4.9h-4.9zM479.3 184h4.9v4.9h-4.9zM484.2 184h4.9v4.9h-4.9zM0 188.8h4.9v4.9h-4.9zM19.4 188.8h4.9v4.9h-4.9zM29 188.8h4.9v4.9h-4.9zM101.7 188.8h4.9v4.9h-4.9zM140.4 188.8h4.9v4.9h-4.9zM145.2 188.8h4.9v4.9h-4.9zM164.6 188.8h4.9v4.9h-4.9zM169.5 188.8h4.9v4.9h-4.9zM184 188.8h4.9v4.9h-4.9zM242.1 188.8h4.9v4.9h-4.9zM271.1 188.8h4.9v4.9h-4.9zM0 193.7h4.9v4.9h-4.9zM9.7 193.7h4.9v4.9h-4.9zM19.4 193.7h4.9v4.9h-4.9zM24.2 193.7h4.9v4.9h-4.9zM48.4 193.7h4.9v4.9h-4.9zM121 193.7h4.9v4.9h-4.9zM150.1 193.7h4.9v4.9h-4.9zM179.1 193.7h4.9v4.9h-4.9zM232.4 193.7h4.9v4.9h-4.9zM246.9 193.7h4.9v4.9h-4.9zM358.3 193.7h4.9v4.9h-4.9zM368 193.7h4.9v4.9h-4.9zM397 193.7h4.9v4.9h-4.9zM416.4 193.7h4.9v4.9h-4.9zM48.4 198.5h4.9v4.9h-4.9zM62.9 198.5h4.9v4.9h-4.9zM72.6 198.5h4.9v4.9h-4.9zM92 198.5h4.9v4.9h-4.9zM198.5 198.5h4.9v4.9h-4.9zM261.4 198.5h4.9v4.9h-4.9zM334.1 198.5h4.9v4.9h-4.9zM368 198.5h4.9v4.9h-4.9zM377.6 198.5h4.9v4.9h-4.9zM406.7 198.5h4.9v4.9h-4.9zM435.7 198.5h4.9v4.9h-4.9zM450.3 198.5h4.9v4.9h-4.9zM455.1 198.5h4.9v4.9h-4.9zM0 203.3h4.9v4.9h-4.9zM4.8 203.3h4.9v4.9h-4.9zM24.2 203.3h4.9v4.9h-4.9zM92 203.3h4.9v4.9h-4.9zM130.7 203.3h4.9v4.9h-4.9zM164.6 203.3h4.9v4.9h-4.9zM305 203.3h4.9v4.9h-4.9zM348.6 203.3h4.9v4.9h-4.9zM358.3 203.3h4.9v4.9h-4.9zM363.1 203.3h4.9v4.9h-4.9zM38.7 208.2h4.9v4.9h-4.9zM62.9 208.2h4.9v4.9h-4.9zM101.7 208.2h4.9v4.9h-4.9zM106.5 208.2h4.9v4.9h-4.9zM130.7 208.2h4.9v4.9h-4.9zM135.6 208.2h4.9v4.9h-4.9zM242.1 208.2h4.9v4.9h-4.9zM280.8 208.2h4.9v4.9h-4.9zM295.3 208.2h4.9v4.9h-4.9zM348.6 208.2h4.9v4.9h-4.9zM460 208.2h4.9v4.9h-4.9zM14.5 213h4.9v4.9h-4.9zM116.2 213h4.9v4.9h-4.9zM174.3 213h4.9v4.9h-4.9zM179.1 213h4.9v4.9h-4.9zM237.2 213h4.9v4.9h-4.9zM271.1 213h4.9v4.9h-4.9zM305 213h4.9v4.9h-4.9zM309.9 213h4.9v4.9h-4.9zM334.1 213h4.9v4.9h-4.9zM348.6 213h4.9v4.9h-4.9zM353.4 213h4.9v4.9h-4.9zM392.2 213h4.9v4.9h-4.9zM406.7 213h4.9v4.9h-4.9zM421.2 213h4.9v4.9h-4.9zM426.1 213h4.9v4.9h-4.9zM445.4 213h4.9v4.9h-4.9zM464.8 213h4.9v4.9h-4.9zM484.2 213h4.9v4.9h-4.9zM4.8 217.9h4.9v4.9h-4.9zM9.7 217.9h4.9v4.9h-4.9zM14.5 217.9h4.9v4.9h-4.9zM48.4 217.9h4.9v4.9h-4.9zM67.8 217.9h4.9v4.9h-4.9zM72.6 217.9h4.9v4.9h-4.9zM77.5 217.9h4.9v4.9h-4.9zM111.4 217.9h4.9v4.9h-4.9zM150.1 217.9h4.9v4.9h-4.9zM169.5 217.9h4.9v4.9h-4.9zM179.1 217.9h4.9v4.9h-4.9zM193.7 217.9h4.9v4.9h-4.9zM213 217.9h4.9v4.9h-4.9zM232.4 217.9h4.9v4.9h-4.9zM271.1 217.9h4.9v4.9h-4.9zM309.9 217.9h4.9v4.9h-4.9zM314.7 217.9h4.9v4.9h-4.9zM334.1 217.9h4.9v4.9h-4.9zM343.8 217.9h4.9v4.9h-4.9zM368 217.9h4.9v4.9h-4.9zM430.9 217.9h4.9v4.9h-4.9zM440.6 217.9h4.9v4.9h-4.9zM455.1 217.9h4.9v4.9h-4.9zM464.8 217.9h4.9v4.9h-4.9zM484.2 217.9h4.9v4.9h-4.9zM0 222.7h4.9v4.9h-4.9zM33.9 222.7h4.9v4.9h-4.9zM121 222.7h4.9v4.9h-4.9zM159.8 222.7h4.9v4.9h-4.9zM164.6 222.7h4.9v4.9h-4.9zM193.7 222.7h4.9v4.9h-4.9zM392.2 222.7h4.9v4.9h-4.9zM406.7 222.7h4.9v4.9h-4.9zM426.1 222.7h4.9v4.9h-4.9zM474.5 222.7h4.9v4.9h-4.9zM479.3 222.7h4.9v4.9h-4.9zM33.9 227.6h4.9v4.9h-4.9zM38.7 227.6h4.9v4.9h-4.9zM67.8 227.6h4.9v4.9h-4.9zM82.3 227.6h4.9v4.9h-4.9zM111.4 227.6h4.9v4.9h-4.9zM135.6 227.6h4.9v4.9h-4.9zM154.9 227.6h4.9v4.9h-4.9zM184 227.6h4.9v4.9h-4.9zM217.9 227.6h4.9v4.9h-4.9zM232.4 227.6h4.9v4.9h-4.9zM242.1 227.6h4.9v4.9h-4.9zM261.4 227.6h4.9v4.9h-4.9zM276 227.6h4.9v4.9h-4.9zM445.4 227.6h4.9v4.9h-4.9zM460 227.6h4.9v4.9h-4.9zM484.2 227.6h4.9v4.9h-4.9zM0 232.4h4.9v4.9h-4.9zM33.9 232.4h4.9v4.9h-4.9zM38.7 232.4h4.9v4.9h-4.9zM53.3 232.4h4.9v4.9h-4.9zM92 232.4h4.9v4.9h-4.9zM116.2 232.4h4.9v4.9h-4.9zM121 232.4h4.9v4.9h-4.9zM125.9 232.4h4.9v4.9h-4.9zM130.7 232.4h4.9v4.9h-4.9zM169.5 232.4h4.9v4.9h-4.9zM184 232.4h4.9v4.9h-4.9zM217.9 232.4h4.9v4.9h-4.9zM261.4 232.4h4.9v4.9h-4.9zM324.4 232.4h4.9v4.9h-4.9zM348.6 232.4h4.9v4.9h-4.9zM363.1 232.4h4.9v4.9h-4.9zM440.6 232.4h4.9v4.9h-4.9zM460 232.4h4.9v4.9h-4.9zM464.8 232.4h4.9v4.9h-4.9zM24.2 237.2h4.9v4.9h-4.9zM53.3 237.2h4.9v4.9h-4.9zM62.9 237.2h4.9v4.9h-4.9zM72.6 237.2h4.9v4.9h-4.9zM82.3 237.2h4.9v4.9h-4.9zM111.4 237.2h4.9v4.9h-4.9zM125.9 237.2h4.9v4.9h-4.9zM130.7 237.2h4.9v4.9h-4.9zM154.9 237.2h4.9v4.9h-4.9zM164.6 237.2h4.9v4.9h-4.9zM237.2 237.2h4.9v4.9h-4.9zM343.8 237.2h4.9v4.9h-4.9zM411.5 237.2h4.9v4.9h-4.9zM426.1 237.2h4.9v4.9h-4.9zM484.2 237.2h4.9v4.9h-4.9zM4.8 242.1h4.9v4.9h-4.9zM24.2 242.1h4.9v4.9h-4.9zM43.6 242.1h4.9v4.9h-4.9zM77.5 242.1h4.9v4.9h-4.9zM159.8 242.1h4.9v4.9h-4.9zM188.8 242.1h4.9v4.9h-4.9zM353.4 242.1h4.9v4.9h-4.9zM397 242.1h4.9v4.9h-4.9zM411.5 242.1h4.9v4.9h-4.9zM0 246.9h4.9v4.9h-4.9zM29 246.9h4.9v4.9h-4.9zM106.5 246.9h4.9v4.9h-4.9zM198.5 246.9h4.9v4.9h-4.9zM232.4 246.9h4.9v4.9h-4.9zM246.9 246.9h4.9v4.9h-4.9zM300.2 246.9h4.9v4.9h-4.9zM377.6 246.9h4.9v4.9h-4.9zM392.2 246.9h4.9v4.9h-4.9zM430.9 246.9h4.9v4.9h-4.9zM445.4 246.9h4.9v4.9h-4.9zM450.3 246.9h4.9v4.9h-4.9zM455.1 246.9h4.9v4.9h-4.9zM82.3 251.8h4.9v4.9h-4.9zM96.8 251.8h4.9v4.9h-4.9zM125.9 251.8h4.9v4.9h-4.9zM184 251.8h4.9v4.9h-4.9zM246.9 251.8h4.9v4.9h-4.9zM266.3 251.8h4.9v4.9h-4.9zM300.2 251.8h4.9v4.9h-4.9zM305 251.8h4.9v4.9h-4.9zM309.9 251.8h4.9v4.9h-4.9zM348.6 251.8h4.9v4.9h-4.9zM353.4 251.8h4.9v4.9h-4.9zM363.1 251.8h4.9v4.9h-4.9zM368 251.8h4.9v4.9h-4.9zM397 251.8h4.9v4.9h-4.9zM4.8 256.6h4.9v4.9h-4.9zM9.7 256.6h4.9v4.9h-4.9zM82.3 256.6h4.9v4.9h-4.9zM101.7 256.6h4.9v4.9h-4.9zM125.9 256.6h4.9v4.9h-4.9zM130.7 256.6h4.9v4.9h-4.9zM179.1 256.6h4.9v4.9h-4.9zM193.7 256.6h4.9v4.9h-4.9zM305 256.6h4.9v4.9h-4.9zM314.7 256.6h4.9v4.9h-4.9zM382.5 256.6h4.9v4.9h-4.9zM440.6 256.6h4.9v4.9h-4.9zM450.3 256.6h4.9v4.9h-4.9zM125.9 261.4h4.9v4.9h-4.9zM154.9 261.4h4.9v4.9h-4.9zM198.5 261.4h4.9v4.9h-4.9zM208.2 261.4h4.9v4.9h-4.9zM222.7 261.4h4.9v4.9h-4.9zM232.4 261.4h4.9v4.9h-4.9zM246.9 261.4h4.9v4.9h-4.9zM256.6 261.4h4.9v4.9h-4.9zM309.9 261.4h4.9v4.9h-4.9zM314.7 261.4h4.9v4.9h-4.9zM319.5 261.4h4.9v4.9h-4.9zM334.1 261.4h4.9v4.9h-4.9zM343.8 261.4h4.9v4.9h-4.9zM348.6 261.4h4.9v4.9h-4.9zM368 261.4h4.9v4.9h-4.9zM382.5 261.4h4.9v4.9h-4.9zM401.9 261.4h4.9v4.9h-4.9zM430.9 261.4h4.9v4.9h-4.9zM4.8 266.3h4.9v4.9h-4.9zM48.4 266.3h4.9v4.9h-4.9zM62.9 266.3h4.9v4.9h-4.9zM82.3 266.3h4.9v4.9h-4.9zM130.7 266.3h4.9v4.9h-4.9zM140.4 266.3h4.9v4.9h-4.9zM174.3 266.3h4.9v4.9h-4.9zM179.1 266.3h4.9v4.9h-4.9zM188.8 266.3h4.9v4.9h-4.9zM237.2 266.3h4.9v4.9h-4.9zM285.7 266.3h4.9v4.9h-4.9zM295.3 266.3h4.9v4.9h-4.9zM329.2 266.3h4.9v4.9h-4.9zM401.9 266.3h4.9v4.9h-4.9zM406.7 266.3h4.9v4.9h-4.9zM460 266.3h4.9v4.9h-4.9zM9.7 271.1h4.9v4.9h-4.9zM82.3 271.1h4.9v4.9h-4.9zM101.7 271.1h4.9v4.9h-4.9zM140.4 271.1h4.9v4.9h-4.9zM154.9 271.1h4.9v4.9h-4.9zM179.1 271.1h4.9v4.9h-4.9zM266.3 271.1h4.9v4.9h-4.9zM280.8 271.1h4.9v4.9h-4.9zM387.3 271.1h4.9v4.9h-4.9zM421.2 271.1h4.9v4.9h-4.9zM464.8 271.1h4.9v4.9h-4.9zM4.8 276h4.9v4.9h-4.9zM29 276h4.9v4.9h-4.9zM106.5 276h4.9v4.9h-4.9zM125.9 276h4.9v4.9h-4.9zM159.8 276h4.9v4.9h-4.9zM237.2 276h4.9v4.9h-4.9zM280.8 276h4.9v4.9h-4.9zM295.3 276h4.9v4.9h-4.9zM314.7 276h4.9v4.9h-4.9zM338.9 276h4.9v4.9h-4.9zM353.4 276h4.9v4.9h-4.9zM14.5 280.8h4.9v4.9h-4.9zM38.7 280.8h4.9v4.9h-4.9zM43.6 280.8h4.9v4.9h-4.9zM53.3 280.8h4.9v4.9h-4.9zM72.6 280.8h4.9v4.9h-4.9zM77.5 280.8h4.9v4.9h-4.9zM82.3 280.8h4.9v4.9h-4.9zM135.6 280.8h4.9v4.9h-4.9zM145.2 280.8h4.9v4.9h-4.9zM184 280.8h4.9v4.9h-4.9zM261.4 280.8h4.9v4.9h-4.9zM271.1 280.8h4.9v4.9h-4.9zM285.7 280.8h4.9v4.9h-4.9zM300.2 280.8h4.9v4.9h-4.9zM353.4 280.8h4.9v4.9h-4.9zM358.3 280.8h4.9v4.9h-4.9zM372.8 280.8h4.9v4.9h-4.9zM450.3 280.8h4.9v4.9h-4.9zM464.8 280.8h4.9v4.9h-4.9zM14.5 285.7h4.9v4.9h-4.9zM72.6 285.7h4.9v4.9h-4.9zM159.8 285.7h4.9v4.9h-4.9zM174.3 285.7h4.9v4.9h-4.9zM242.1 285.7h4.9v4.9h-4.9zM261.4 285.7h4.9v4.9h-4.9zM280.8 285.7h4.9v4.9h-4.9zM295.3 285.7h4.9v4.9h-4.9zM300.2 285.7h4.9v4.9h-4.9zM305 285.7h4.9v4.9h-4.9zM348.6 285.7h4.9v4.9h-4.9zM358.3 285.7h4.9v4.9h-4.9zM435.7 285.7h4.9v4.9h-4.9zM445.4 285.7h4.9v4.9h-4.9zM460 285.7h4.9v4.9h-4.9zM48.4 290.5h4.9v4.9h-4.9zM96.8 290.5h4.9v4.9h-4.9zM111.4 290.5h4.9v4.9h-4.9zM154.9 290.5h4.9v4.9h-4.9zM169.5 290.5h4.9v4.9h-4.9zM174.3 290.5h4.9v4.9h-4.9zM188.8 290.5h4.9v4.9h-4.9zM203.3 290.5h4.9v4.9h-4.9zM208.2 290.5h4.9v4.9h-4.9zM232.4 290.5h4.9v4.9h-4.9zM246.9 290.5h4.9v4.9h-4.9zM251.8 290.5h4.9v4.9h-4.9zM271.1 290.5h4.9v4.9h-4.9zM300.2 290.5h4.9v4.9h-4.9zM305 290.5h4.9v4.9h-4.9zM363.1 290.5h4.9v4.9h-4.9zM382.5 290.5h4.9v4.9h-4.9zM426.1 290.5h4.9v4.9h-4.9zM455.1 290.5h4.9v4.9h-4.9zM464.8 290.5h4.9v4.9h-4.9zM29 295.3h4.9v4.9h-4.9zM48.4 295.3h4.9v4.9h-4.9zM67.8 295.3h4.9v4.9h-4.9zM121 295.3h4.9v4.9h-4.9zM125.9 295.3h4.9v4.9h-4.9zM150.1 295.3h4.9v4.9h-4.9zM184 295.3h4.9v4.9h-4.9zM188.8 295.3h4.9v4.9h-4.9zM193.7 295.3h4.9v4.9h-4.9zM213 295.3h4.9v4.9h-4.9zM222.7 295.3h4.9v4.9h-4.9zM242.1 295.3h4.9v4.9h-4.9zM246.9 295.3h4.9v4.9h-4.9zM256.6 295.3h4.9v4.9h-4.9zM285.7 295.3h4.9v4.9h-4.9zM324.4 295.3h4.9v4.9h-4.9zM460 295.3h4.9v4.9h-4.9zM464.8 295.3h4.9v4.9h-4.9zM474.5 295.3h4.9v4.9h-4.9zM29 300.2h4.9v4.9h-4.9zM33.9 300.2h4.9v4.9h-4.9zM111.4 300.2h4.9v4.9h-4.9zM130.7 300.2h4.9v4.9h-4.9zM193.7 300.2h4.9v4.9h-4.9zM208.2 300.2h4.9v4.9h-4.9zM213 300.2h4.9v4.9h-4.9zM261.4 300.2h4.9v4.9h-4.9zM285.7 300.2h4.9v4.9h-4.9zM319.5 300.2h4.9v4.9h-4.9zM4.8 305h4.9v4.9h-4.9zM72.6 305h4.9v4.9h-4.9zM82.3 305h4.9v4.9h-4.9zM96.8 305h4.9v4.9h-4.9zM169.5 305h4.9v4.9h-4.9zM174.3 305h4.9v4.9h-4.9zM198.5 305h4.9v4.9h-4.9zM213 305h4.9v4.9h-4.9zM217.9 305h4.9v4.9h-4.9zM242.1 305h4.9v4.9h-4.9zM319.5 305h4.9v4.9h-4.9zM334.1 305h4.9v4.9h-4.9zM387.3 305h4.9v4.9h-4.9zM411.5 305h4.9v4.9h-4.9zM445.4 305h4.9v4.9h-4.9zM0 309.9h4.9v4.9h-4.9zM9.7 309.9h4.9v4.9h-4.9zM38.7 309.9h4.9v4.9h-4.9zM92 309.9h4.9v4.9h-4.9zM106.5 309.9h4.9v4.9h-4.9zM121 309.9h4.9v4.9h-4.9zM159.8 309.9h4.9v4.9h-4.9zM217.9 309.9h4.9v4.9h-4.9zM256.6 309.9h4.9v4.9h-4.9zM266.3 309.9h4.9v4.9h-4.9zM300.2 309.9h4.9v4.9h-4.9zM353.4 309.9h4.9v4.9h-4.9zM363.1 309.9h4.9v4.9h-4.9zM421.2 309.9h4.9v4.9h-4.9zM426.1 309.9h4.9v4.9h-4.9zM479.3 309.9h4.9v4.9h-4.9zM116.2 314.7h4.9v4.9h-4.9zM145.2 314.7h4.9v4.9h-4.9zM150.1 314.7h4.9v4.9h-4.9zM169.5 314.7h4.9v4.9h-4.9zM188.8 314.7h4.9v4.9h-4.9zM193.7 314.7h4.9v4.9h-4.9zM198.5 314.7h4.9v4.9h-4.9zM246.9 314.7h4.9v4.9h-4.9zM261.4 314.7h4.9v4.9h-4.9zM295.3 314.7h4.9v4.9h-4.9zM334.1 314.7h4.9v4.9h-4.9zM426.1 314.7h4.9v4.9h-4.9zM450.3 314.7h4.9v4.9h-4.9zM469.6 314.7h4.9v4.9h-4.9zM38.7 319.5h4.9v4.9h-4.9zM48.4 319.5h4.9v4.9h-4.9zM87.1 319.5h4.9v4.9h-4.9zM164.6 319.5h4.9v4.9h-4.9zM198.5 319.5h4.9v4.9h-4.9zM203.3 319.5h4.9v4.9h-4.9zM213 319.5h4.9v4.9h-4.9zM246.9 319.5h4.9v4.9h-4.9zM295.3 319.5h4.9v4.9h-4.9zM314.7 319.5h4.9v4.9h-4.9zM334.1 319.5h4.9v4.9h-4.9zM430.9 319.5h4.9v4.9h-4.9zM469.6 319.5h4.9v4.9h-4.9zM484.2 319.5h4.9v4.9h-4.9zM19.4 324.4h4.9v4.9h-4.9zM33.9 324.4h4.9v4.9h-4.9zM53.3 324.4h4.9v4.9h-4.9zM116.2 324.4h4.9v4.9h-4.9zM135.6 324.4h4.9v4.9h-4.9zM140.4 324.4h4.9v4.9h-4.9zM154.9 324.4h4.9v4.9h-4.9zM179.1 324.4h4.9v4.9h-4.9zM208.2 324.4h4.9v4.9h-4.9zM213 324.4h4.9v4.9h-4.9zM217.9 324.4h4.9v4.9h-4.9zM256.6 324.4h4.9v4.9h-4.9zM266.3 324.4h4.9v4.9h-4.9zM290.5 324.4h4.9v4.9h-4.9zM309.9 324.4h4.9v4.9h-4.9zM334.1 324.4h4.9v4.9h-4.9zM338.9 324.4h4.9v4.9h-4.9zM368 324.4h4.9v4.9h-4.9zM401.9 324.4h4.9v4.9h-4.9zM426.1 324.4h4.9v4.9h-4.9zM484.2 324.4h4.9v4.9h-4.9zM24.2 329.2h4.9v4.9h-4.9zM48.4 329.2h4.9v4.9h-4.9zM58.1 329.2h4.9v4.9h-4.9zM77.5 329.2h4.9v4.9h-4.9zM96.8 329.2h4.9v4.9h-4.9zM111.4 329.2h4.9v4.9h-4.9zM130.7 329.2h4.9v4.9h-4.9zM188.8 329.2h4.9v4.9h-4.9zM193.7 329.2h4.9v4.9h-4.9zM237.2 329.2h4.9v4.9h-4.9zM271.1 329.2h4.9v4.9h-4.9zM382.5 329.2h4.9v4.9h-4.9zM387.3 329.2h4.9v4.9h-4.9zM392.2 329.2h4.9v4.9h-4.9zM397 329.2h4.9v4.9h-4.9zM455.1 329.2h4.9v4.9h-4.9zM464.8 329.2h4.9v4.9h-4.9zM4.8 334.1h4.9v4.9h-4.9zM101.7 334.1h4.9v4.9h-4.9zM111.4 334.1h4.9v4.9h-4.9zM164.6 334.1h4.9v4.9h-4.9zM198.5 334.1h4.9v4.9h-4.9zM208.2 334.1h4.9v4.9h-4.9zM217.9 334.1h4.9v4.9h-4.9zM251.8 334.1h4.9v4.9h-4.9zM266.3 334.1h4.9v4.9h-4.9zM276 334.1h4.9v4.9h-4.9zM300.2 334.1h4.9v4.9h-4.9zM353.4 334.1h4.9v4.9h-4.9zM358.3 334.1h4.9v4.9h-4.9zM363.1 334.1h4.9v4.9h-4.9zM484.2 334.1h4.9v4.9h-4.9zM19.4 338.9h4.9v4.9h-4.9zM96.8 338.9h4.9v4.9h-4.9zM164.6 338.9h4.9v4.9h-4.9zM208.2 338.9h4.9v4.9h-4.9zM256.6 338.9h4.9v4.9h-4.9zM309.9 338.9h4.9v4.9h-4.9zM334.1 338.9h4.9v4.9h-4.9zM372.8 338.9h4.9v4.9h-4.9zM377.6 338.9h4.9v4.9h-4.9zM401.9 338.9h4.9v4.9h-4.9zM426.1 338.9h4.9v4.9h-4.9zM460 338.9h4.9v4.9h-4.9zM464.8 338.9h4.9v4.9h-4.9zM0 343.8h4.9v4.9h-4.9zM4.8 343.8h4.9v4.9h-4.9zM9.7 343.8h4.9v4.9h-4.9zM29 343.8h4.9v4.9h-4.9zM33.9 343.8h4.9v4.9h-4.9zM48.4 343.8h4.9v4.9h-4.9zM82.3 343.8h4.9v4.9h-4.9zM101.7 343.8h4.9v4.9h-4.9zM198.5 343.8h4.9v4.9h-4.9zM208.2 343.8h4.9v4.9h-4.9zM280.8 343.8h4.9v4.9h-4.9zM314.7 343.8h4.9v4.9h-4.9zM363.1 343.8h4.9v4.9h-4.9zM382.5 343.8h4.9v4.9h-4.9zM401.9 343.8h4.9v4.9h-4.9zM9.7 348.6h4.9v4.9h-4.9zM33.9 348.6h4.9v4.9h-4.9zM48.4 348.6h4.9v4.9h-4.9zM53.3 348.6h4.9v4.9h-4.9zM116.2 348.6h4.9v4.9h-4.9zM121 348.6h4.9v4.9h-4.9zM125.9 348.6h4.9v4.9h-4.9zM154.9 348.6h4.9v4.9h-4.9zM159.8 348.6h4.9v4.9h-4.9zM164.6 348.6h4.9v4.9h-4.9zM208.2 348.6h4.9v4.9h-4.9zM242.1 348.6h4.9v4.9h-4.9zM285.7 348.6h4.9v4.9h-4.9zM382.5 348.6h4.9v4.9h-4.9zM445.4 348.6h4.9v4.9h-4.9zM0 353.4h4.9v4.9h-4.9zM140.4 353.4h4.9v4.9h-4.9zM203.3 353.4h4.9v4.9h-4.9zM256.6 353.4h4.9v4.9h-4.9zM271.1 353.4h4.9v4.9h-4.9zM305 353.4h4.9v4.9h-4.9zM319.5 353.4h4.9v4.9h-4.9zM329.2 353.4h4.9v4.9h-4.9zM338.9 353.4h4.9v4.9h-4.9zM348.6 353.4h4.9v4.9h-4.9zM358.3 353.4h4.9v4.9h-4.9zM392.2 353.4h4.9v4.9h-4.9zM401.9 353.4h4.9v4.9h-4.9zM430.9 353.4h4.9v4.9h-4.9zM450.3 353.4h4.9v4.9h-4.9zM469.6 353.4h4.9v4.9h-4.9zM38.7 358.3h4.9v4.9h-4.9zM48.4 358.3h4.9v4.9h-4.9zM82.3 358.3h4.9v4.9h-4.9zM101.7 358.3h4.9v4.9h-4.9zM125.9 358.3h4.9v4.9h-4.9zM169.5 358.3h4.9v4.9h-4.9zM179.1 358.3h4.9v4.9h-4.9zM256.6 358.3h4.9v4.9h-4.9zM300.2 358.3h4.9v4.9h-4.9zM309.9 358.3h4.9v4.9h-4.9zM358.3 358.3h4.9v4.9h-4.9zM387.3 358.3h4.9v4.9h-4.9zM397 358.3h4.9v4.9h-4.9zM401.9 358.3h4.9v4.9h-4.9zM469.6 358.3h4.9v4.9h-4.9zM14.5 363.1h4.9v4.9h-4.9zM87.1 363.1h4.9v4.9h-4.9zM145.2 363.1h4.9v4.9h-4.9zM150.1 363.1h4.9v4.9h-4.9zM179.1 363.1h4.9v4.9h-4.9zM213 363.1h4.9v4.9h-4.9zM256.6 363.1h4.9v4.9h-4.9zM266.3 363.1h4.9v4.9h-4.9zM329.2 363.1h4.9v4.9h-4.9zM377.6 363.1h4.9v4.9h-4.9zM397 363.1h4.9v4.9h-4.9zM416.4 363.1h4.9v4.9h-4.9zM421.2 363.1h4.9v4.9h-4.9zM430.9 363.1h4.9v4.9h-4.9zM445.4 363.1h4.9v4.9h-4.9zM460 363.1h4.9v4.9h-4.9zM4.8 368h4.9v4.9h-4.9zM53.3 368h4.9v4.9h-4.9zM67.8 368h4.9v4.9h-4.9zM111.4 368h4.9v4.9h-4.9zM213 368h4.9v4.9h-4.9zM271.1 368h4.9v4.9h-4.9zM324.4 368h4.9v4.9h-4.9zM338.9 368h4.9v4.9h-4.9zM348.6 368h4.9v4.9h-4.9zM372.8 368h4.9v4.9h-4.9zM387.3 368h4.9v4.9h-4.9zM411.5 368h4.9v4.9h-4.9zM430.9 368h4.9v4.9h-4.9zM484.2 368h4.9v4.9h-4.9zM62.9 372.8h4.9v4.9h-4.9zM67.8 372.8h4.9v4.9h-4.9zM106.5 372.8h4.9v4.9h-4.9zM111.4 372.8h4.9v4.9h-4.9zM150.1 372.8h4.9v4.9h-4.9zM208.2 372.8h4.9v4.9h-4.9zM213 372.8h4.9v4.9h-4.9zM232.4 372.8h4.9v4.9h-4.9zM237.2 372.8h4.9v4.9h-4.9zM266.3 372.8h4.9v4.9h-4.9zM271.1 372.8h4.9v4.9h-4.9zM319.5 372.8h4.9v4.9h-4.9zM377.6 372.8h4.9v4.9h-4.9zM401.9 372.8h4.9v4.9h-4.9zM14.5 377.6h4.9v4.9h-4.9zM121 377.6h4.9v4.9h-4.9zM159.8 377.6h4.9v4.9h-4.9zM222.7 377.6h4.9v4.9h-4.9zM276 377.6h4.9v4.9h-4.9zM285.7 377.6h4.9v4.9h-4.9zM305 377.6h4.9v4.9h-4.9zM348.6 377.6h4.9v4.9h-4.9zM358.3 377.6h4.9v4.9h-4.9zM377.6 377.6h4.9v4.9h-4.9zM416.4 377.6h4.9v4.9h-4.9zM435.7 377.6h4.9v4.9h-4.9zM19.4 382.5h4.9v4.9h-4.9zM48.4 382.5h4.9v4.9h-4.9zM145.2 382.5h4.9v4.9h-4.9zM154.9 382.5h4.9v4.9h-4.9zM232.4 382.5h4.9v4.9h-4.9zM237.2 382.5h4.9v4.9h-4.9zM256.6 382.5h4.9v4.9h-4.9zM276 382.5h4.9v4.9h-4.9zM285.7 382.5h4.9v4.9h-4.9zM290.5 382.5h4.9v4.9h-4.9zM305 382.5h4.9v4.9h-4.9zM319.5 382.5h4.9v4.9h-4.9zM343.8 382.5h4.9v4.9h-4.9zM353.4 382.5h4.9v4.9h-4.9zM430.9 382.5h4.9v4.9h-4.9zM464.8 382.5h4.9v4.9h-4.9zM469.6 382.5h4.9v4.9h-4.9zM484.2 382.5h4.9v4.9h-4.9zM4.8 387.3h4.9v4.9h-4.9zM38.7 387.3h4.9v4.9h-4.9zM125.9 387.3h4.9v4.9h-4.9zM159.8 387.3h4.9v4.9h-4.9zM217.9 387.3h4.9v4.9h-4.9zM242.1 387.3h4.9v4.9h-4.9zM266.3 387.3h4.9v4.9h-4.9zM319.5 387.3h4.9v4.9h-4.9zM334.1 387.3h4.9v4.9h-4.9zM430.9 387.3h4.9v4.9h-4.9zM440.6 387.3h4.9v4.9h-4.9zM445.4 387.3h4.9v4.9h-4.9zM9.7 392.2h4.9v4.9h-4.9zM19.4 392.2h4.9v4.9h-4.9zM145.2 392.2h4.9v4.9h-4.9zM154.9 392.2h4.9v4.9h-4.9zM213 392.2h4.9v4.9h-4.9zM227.6 392.2h4.9v4.9h-4.9zM232.4 392.2h4.9v4.9h-4.9zM246.9 392.2h4.9v4.9h-4.9zM251.8 392.2h4.9v4.9h-4.9zM261.4 392.2h4.9v4.9h-4.9zM271.1 392.2h4.9v4.9h-4.9zM285.7 392.2h4.9v4.9h-4.9zM290.5 392.2h4.9v4.9h-4.9zM343.8 392.2h4.9v4.9h-4.9zM348.6 392.2h4.9v4.9h-4.9zM411.5 392.2h4.9v4.9h-4.9zM421.2 392.2h4.9v4.9h-4.9zM426.1 392.2h4.9v4.9h-4.9zM430.9 392.2h4.9v4.9h-4.9zM0 397h4.9v4.9h-4.9zM43.6 397h4.9v4.9h-4.9zM48.4 397h4.9v4.9h-4.9zM121 397h4.9v4.9h-4.9zM135.6 397h4.9v4.9h-4.9zM198.5 397h4.9v4.9h-4.9zM227.6 397h4.9v4.9h-4.9zM242.1 397h4.9v4.9h-4.9zM295.3 397h4.9v4.9h-4.9zM319.5 397h4.9v4.9h-4.9zM324.4 397h4.9v4.9h-4.9zM338.9 397h4.9v4.9h-4.9zM343.8 397h4.9v4.9h-4.9zM426.1 397h4.9v4.9h-4.9zM430.9 397h4.9v4.9h-4.9zM440.6 397h4.9v4.9h-4.9zM445.4 397h4.9v4.9h-4.9zM460 397h4.9v4.9h-4.9zM484.2 397h4.9v4.9h-4.9zM48.4 401.9h4.9v4.9h-4.9zM72.6 401.9h4.9v4.9h-4.9zM130.7 401.9h4.9v4.9h-4.9zM174.3 401.9h4.9v4.9h-4.9zM184 401.9h4.9v4.9h-4.9zM242.1 401.9h4.9v4.9h-4.9zM266.3 401.9h4.9v4.9h-4.9zM271.1 401.9h4.9v4.9h-4.9zM285.7 401.9h4.9v4.9h-4.9zM309.9 401.9h4.9v4.9h-4.9zM314.7 401.9h4.9v4.9h-4.9zM392.2 401.9h4.9v4.9h-4.9zM401.9 401.9h4.9v4.9h-4.9zM484.2 401.9h4.9v4.9h-4.9zM38.7 406.7h4.9v4.9h-4.9zM43.6 406.7h4.9v4.9h-4.9zM72.6 406.7h4.9v4.9h-4.9zM82.3 406.7h4.9v4.9h-4.9zM92 406.7h4.9v4.9h-4.9zM140.4 406.7h4.9v4.9h-4.9zM213 406.7h4.9v4.9h-4.9zM217.9 406.7h4.9v4.9h-4.9zM237.2 406.7h4.9v4.9h-4.9zM300.2 406.7h4.9v4.9h-4.9zM309.9 406.7h4.9v4.9h-4.9zM329.2 406.7h4.9v4.9h-4.9zM377.6 406.7h4.9v4.9h-4.9zM464.8 406.7h4.9v4.9h-4.9zM19.4 411.5h4.9v4.9h-4.9zM33.9 411.5h4.9v4.9h-4.9zM43.6 411.5h4.9v4.9h-4.9zM125.9 411.5h4.9v4.9h-4.9zM300.2 411.5h4.9v4.9h-4.9zM358.3 411.5h4.9v4.9h-4.9zM382.5 411.5h4.9v4.9h-4.9zM397 411.5h4.9v4.9h-4.9zM406.7 411.5h4.9v4.9h-4.9zM464.8 411.5h4.9v4.9h-4.9zM24.2 416.4h4.9v4.9h-4.9zM33.9 416.4h4.9v4.9h-4.9zM43.6 416.4h4.9v4.9h-4.9zM48.4 416.4h4.9v4.9h-4.9zM77.5 416.4h4.9v4.9h-4.9zM145.2 416.4h4.9v4.9h-4.9zM159.8 416.4h4.9v4.9h-4.9zM242.1 416.4h4.9v4.9h-4.9zM300.2 416.4h4.9v4.9h-4.9zM305 416.4h4.9v4.9h-4.9zM309.9 416.4h4.9v4.9h-4.9zM324.4 416.4h4.9v4.9h-4.9zM392.2 416.4h4.9v4.9h-4.9zM426.1 416.4h4.9v4.9h-4.9zM435.7 416.4h4.9v4.9h-4.9zM455.1 416.4h4.9v4.9h-4.9zM469.6 416.4h4.9v4.9h-4.9zM479.3 416.4h4.9v4.9h-4.9zM43.6 421.2h4.9v4.9h-4.9zM145.2 421.2h4.9v4.9h-4.9zM174.3 421.2h4.9v4.9h-4.9zM188.8 421.2h4.9v4.9h-4.9zM198.5 421.2h4.9v4.9h-4.9zM271.1 421.2h4.9v4.9h-4.9zM285.7 421.2h4.9v4.9h-4.9zM314.7 421.2h4.9v4.9h-4.9zM372.8 421.2h4.9v4.9h-4.9zM382.5 421.2h4.9v4.9h-4.9zM440.6 421.2h4.9v4.9h-4.9zM4.8 426.1h4.9v4.9h-4.9zM29 426.1h4.9v4.9h-4.9zM48.4 426.1h4.9v4.9h-4.9zM58.1 426.1h4.9v4.9h-4.9zM67.8 426.1h4.9v4.9h-4.9zM72.6 426.1h4.9v4.9h-4.9zM96.8 426.1h4.9v4.9h-4.9zM145.2 426.1h4.9v4.9h-4.9zM164.6 426.1h4.9v4.9h-4.9zM334.1 426.1h4.9v4.9h-4.9zM353.4 426.1h4.9v4.9h-4.9zM464.8 426.1h4.9v4.9h-4.9zM48.4 430.9h4.9v4.9h-4.9zM53.3 430.9h4.9v4.9h-4.9zM67.8 430.9h4.9v4.9h-4.9zM101.7 430.9h4.9v4.9h-4.9zM140.4 430.9h4.9v4.9h-4.9zM193.7 430.9h4.9v4.9h-4.9zM208.2 430.9h4.9v4.9h-4.9zM227.6 430.9h4.9v4.9h-4.9zM232.4 430.9h4.9v4.9h-4.9zM295.3 430.9h4.9v4.9h-4.9zM319.5 430.9h4.9v4.9h-4.9zM338.9 430.9h4.9v4.9h-4.9zM392.2 430.9h4.9v4.9h-4.9zM435.7 430.9h4.9v4.9h-4.9zM445.4 430.9h4.9v4.9h-4.9zM484.2 430.9h4.9v4.9h-4.9zM0 435.7h4.9v4.9h-4.9zM53.3 435.7h4.9v4.9h-4.9zM101.7 435.7h4.9v4.9h-4.9zM130.7 435.7h4.9v4.9h-4.9zM145.2 435.7h4.9v4.9h-4.9zM150.1 435.7h4.9v4.9h-4.9zM174.3 435.7h4.9v4.9h-4.9zM203.3 435.7h4.9v4.9h-4.9zM217.9 435.7h4.9v4.9h-4.9zM242.1 435.7h4.9v4.9h-4.9zM266.3 435.7h4.9v4.9h-4.9zM353.4 435.7h4.9v4.9h-4.9zM377.6 435.7h4.9v4.9h-4.9zM401.9 435.7h4.9v4.9h-4.9zM406.7 435.7h4.9v4.9h-4.9zM435.7 435.7h4.9v4.9h-4.9zM445.4 435.7h4.9v4.9h-4.9zM62.9 440.6h4.9v4.9h-4.9zM96.8 440.6h4.9v4.9h-4.9zM101.7 440.6h4.9v4.9h-4.9zM140.4 440.6h4.9v4.9h-4.9zM188.8 440.6h4.9v4.9h-4.9zM261.4 440.6h4.9v4.9h-4.9zM266.3 440.6h4.9v4.9h-4.9zM271.1 440.6h4.9v4.9h-4.9zM314.7 440.6h4.9v4.9h-4.9zM343.8 440.6h4.9v4.9h-4.9zM430.9 440.6h4.9v4.9h-4.9zM445.4 440.6h4.9v4.9h-4.9zM469.6 440.6h4.9v4.9h-4.9zM479.3 440.6h4.9v4.9h-4.9zM19.4 445.4h4.9v4.9h-4.9zM33.9 445.4h4.9v4.9h-4.9zM58.1 445.4h4.9v4.9h-4.9zM169.5 445.4h4.9v4.9h-4.9zM208.2 445.4h4.9v4.9h-4.9zM222.7 445.4h4.9v4.9h-4.9zM227.6 445.4h4.9v4.9h-4.9zM232.4 445.4h4.9v4.9h-4.9zM246.9 445.4h4.9v4.9h-4.9zM276 445.4h4.9v4.9h-4.9zM343.8 445.4h4.9v4.9h-4.9zM353.4 445.4h4.9v4.9h-4.9zM368 445.4h4.9v4.9h-4.9zM455.1 445.4h4.9v4.9h-4.9zM4.8 450.3h4.9v4.9h-4.9zM9.7 450.3h4.9v4.9h-4.9zM38.7 450.3h4.9v4.9h-4.9zM43.6 450.3h4.9v4.9h-4.9zM53.3 450.3h4.9v4.9h-4.9zM121 450.3h4.9v4.9h-4.9zM140.4 450.3h4.9v4.9h-4.9zM188.8 450.3h4.9v4.9h-4.9zM193.7 450.3h4.9v4.9h-4.9zM217.9 450.3h4.9v4.9h-4.9zM232.4 450.3h4.9v4.9h-4.9zM271.1 450.3h4.9v4.9h-4.9zM290.5 450.3h4.9v4.9h-4.9zM300.2 450.3h4.9v4.9h-4.9zM416.4 450.3h4.9v4.9h-4.9zM435.7 450.3h4.9v4.9h-4.9zM469.6 450.3h4.9v4.9h-4.9zM9.7 455.1h4.9v4.9h-4.9zM53.3 455.1h4.9v4.9h-4.9zM87.1 455.1h4.9v4.9h-4.9zM140.4 455.1h4.9v4.9h-4.9zM159.8 455.1h4.9v4.9h-4.9zM203.3 455.1h4.9v4.9h-4.9zM276 455.1h4.9v4.9h-4.9zM285.7 455.1h4.9v4.9h-4.9zM309.9 455.1h4.9v4.9h-4.9zM314.7 455.1h4.9v4.9h-4.9zM334.1 455.1h4.9v4.9h-4.9zM343.8 455.1h4.9v4.9h-4.9zM392.2 455.1h4.9v4.9h-4.9zM426.1 455.1h4.9v4.9h-4.9zM450.3 455.1h4.9v4.9h-4.9zM455.1 455.1h4.9v4.9h-4.9zM9.7 460h4.9v4.9h-4.9zM19.4 460h4.9v4.9h-4.9zM62.9 460h4.9v4.9h-4.9zM87.1 460h4.9v4.9h-4.9zM130.7 460h4.9v4.9h-4.9zM232.4 460h4.9v4.9h-4.9zM242.1 460h4.9v4.9h-4.9zM271.1 460h4.9v4.9h-4.9zM290.5 460h4.9v4.9h-4.9zM324.4 460h4.9v4.9h-4.9zM343.8 460h4.9v4.9h-4.9zM353.4 460h4.9v4.9h-4.9zM401.9 460h4.9v4.9h-4.9zM416.4 460h4.9v4.9h-4.9zM460 460h4.9v4.9h-4.9zM464.8 460h4.9v4.9h-4.9zM9.7 464.8h4.9v4.9h-4.9zM92 464.8h4.9v4.9h-4.9zM125.9 464.8h4.9v4.9h-4.9zM150.1 464.8h4.9v4.9h-4.9zM193.7 464.8h4.9v4.9h-4.9zM227.6 464.8h4.9v4.9h-4.9zM256.6 464.8h4.9v4.9h-4.9zM285.7 464.8h4.9v4.9h-4.9zM324.4 464.8h4.9v4.9h-4.9zM343.8 464.8h4.9v4.9h-4.9zM392.2 464.8h4.9v4.9h-4.9zM411.5 464.8h4.9v4.9h-4.9zM435.7 464.8h4.9v4.9h-4.9zM440.6 464.8h4.9v4.9h-4.9zM455.1 464.8h4.9v4.9h-4.9zM0 469.6h4.9v4.9h-4.9zM19.4 469.6h4.9v4.9h-4.9zM48.4 469.6h4.9v4.9h-4.9zM121 469.6h4.9v4.9h-4.9zM135.6 469.6h4.9v4.9h-4.9zM140.4 469.6h4.9v4.9h-4.9zM154.9 469.6h4.9v4.9h-4.9zM174.3 469.6h4.9v4.9h-4.9zM208.2 469.6h4.9v4.9h-4.9zM300.2 469.6h4.9v4.9h-4.9zM358.3 469.6h4.9v4.9h-4.9zM368 469.6h4.9v4.9h-4.9zM450.3 469.6h4.9v4.9h-4.9zM460 469.6h4.9v4.9h-4.9zM14.5 474.5h4.9v4.9h-4.9zM38.7 474.5h4.9v4.9h-4.9zM72.6 474.5h4.9v4.9h-4.9zM96.8 474.5h4.9v4.9h-4.9zM130.7 474.5h4.9v4.9h-4.9zM140.4 474.5h4.9v4.9h-4.9zM222.7 474.5h4.9v4.9h-4.9zM246.9 474.5h4.9v4.9h-4.9zM261.4 474.5h4.9v4.9h-4.9zM309.9 474.5h4.9v4.9h-4.9zM397 474.5h4.9v4.9h-4.9zM411.5 474.5h4.9v4.9h-4.9zM19.4 479.3h4.9v4.9h-4.9zM62.9 479.3h4.9v4.9h-4.9zM174.3 479.3h4.9v4.9h-4.9zM227.6 479.3h4.9v4.9h-4.9zM237.2 479.3h4.9v4.9h-4.9zM319.5 479.3h4.9v4.9h-4.9zM358.3 479.3h4.9v4.9h-4.9zM363.1 479.3h4.9v4.9h-4.9zM368 479.3h4.9v4.9h-4.9zM372.8 479.3h4.9v4.9h-4.9zM440.6 479.3h4.9v4.9h-4.9zM24.2 484.2h4.9v4.9h-4.9zM58.1 484.2h4.9v4.9h-4.9zM67.8 484.2h4.9v4.9h-4.9zM92 484.2h4.9v4.9h-4.9zM101.7 484.2h4.9v4.9h-4.9zM106.5 484.2h4.9v4.9h-4.9zM111.4 484.2h4.9v4.9h-4.9zM125.9 484.2h4.9v4.9h-4.9zM174.3 484.2h4.9v4.9h-4.9zM179.1 484.2h4.9v4.9h-4.9zM232.4 484.2h4.9v4.9h-4.9zM309.9 484.2h4.9v4.9h-4.9zM329.2 484.2h4.9v4.9h-4.9zM334.1 484.2h4.9v4.9h-4.9zM343.8 484.2h4.9v4.9h-4.9zM372.8 484.2h4.9v4.9h-4.9zM377.6 484.2h4.9v4.9h-4.9zM435.7 484.2h4.9v4.9h-4.9z"/>
<path fill="#00009d" d="M82.3 0h4.9v4.9h-4.9zM96.8 0h4.9v4.9h-4.9zM242.1 0h4.9v4.9h-4.9zM324.4 0h4.9v4.9h-4.9zM474.5 0h4.9v4.9h-4.9zM43.6 4.8h4.9v4.9h-4.9zM251.8 4.8h4.9v4.9h-4.9zM280.8 4.8h4.9v4.9h-4.9zM338.9 4.8h4.9v4.9h-4.9zM401.9 4.8h4.9v4.9h-4.9zM411.5 4.8h4.9v4.9h-4.9zM421.2 4.8h4.9v4.9h-4.9zM38.7 9.7h4.9v4.9h-4.9zM53.3 9.7h4.9v4.9h-4.9zM96.8 9.7h4.9v4.9h-4.9zM125.9 9.7h4.9v4.9h-4.9zM140.4 9.7h4.9v4.9h-4.9zM392.2 9.7h4.9v4.9h-4.9zM406.7 9.7h4.9v4.9h-4.9zM421.2 9.7h4.9v4.9h-4.9zM9.7 14.5h4.9v4.9h-4.9zM19.4 14.5h4.9v4.9h-4.9zM125.9 14.5h4.9v4.9h-4.9zM222.7 14.5h4.9v4.9h-4.9zM382.5 14.5h4.9v4.9h-4.9zM426.1 14.5h4.9v4.9h-4.9zM53.3 19.4h4.9v4.9h-4.9zM58.1 19.4h4.9v4.9h-4.9zM72.6 19.4h4.9v4.9h-4.9zM193.7 19.4h4.9v4.9h-4.9zM411.5 19.4h4.9v4.9h-4.9zM53.3 24.2h4.9v4.9h-4.9zM58.1 24.2h4.9v4.9h-4.9zM77.5 24.2h4.9v4.9h-4.9zM96.8 24.2h4.9v4.9h-4.9zM121 24.2h4.9v4.9h-4.9zM300.2 24.2h4.9v4.9h-4.9zM329.2 24.2h4.9v4.9h-4.9zM353.4 24.2h4.9v4.9h-4.9zM430.9 24.2h4.9v4.9h-4.9zM96.8 29h4.9v4.9h-4.9zM145.2 29h4.9v4.9h-4.9zM213 29h4.9v4.9h-4.9zM242.1 29h4.9v4.9h-4.9zM368 29h4.9v4.9h-4.9zM397 29h4.9v4.9h-4.9zM4.8 33.9h4.9v4.9h-4.9zM38.7 33.9h4.9v4.9h-4.9zM67.8 33.9h4.9v4.9h-4.9zM87.1 33.9h4.9v4.9h-4.9zM130.7 33.9h4.9v4.9h-4.9zM145.2 33.9h4.9v4.9h-4.9zM198.5 33.9h4.9v4.9h-4.9zM208.2 33.9h4.9v4.9h-4.9zM334.1 33.9h4.9v4.9h-4.9zM382.5 33.9h4.9v4.9h-4.9zM401.9 33.9h4.9v4.9h-4.9zM406.7 33.9h4.9v4.9h-4.9zM33.9 38.7h4.9v4.9h-4.9zM251.8 38.7h4.9v4.9h-4.9zM261.4 38.7h4.9v4.9h-4.9zM290.5 38.7h4.9v4.9h-4.9zM440.6 38.7h4.9v4.9h-4.9zM116.2 43.6h4.9v4.9h-4.9zM130.7 43.6h4.9v4.9h-4.9zM135.6 43.6h4.9v4.9h-4.9zM440.6 43.6h4.9v4.9h-4.9zM474.5 43.6h4.9v4.9h-4.9zM484.2 43.6h4.9v4.9h-4.9zM14.5 48.4h4.9v4.9h-4.9zM101.7 48.4h4.9v4.9h-4.9zM246.9 48.4h4.9v4.9h-4.9zM372.8 48.4h4.9v4.9h-4.9zM445.4 48.4h4.9v4.9h-4.9zM14.5 53.3h4.9v4.9h-4.9zM188.8 53.3h4.9v4.9h-4.9zM222.7 53.3h4.9v4.9h-4.9zM271.1 53.3h4.9v4.9h-4.9zM435.7 53.3h4.9v4.9h-4.9zM58.1 58.1h4.9v4.9h-4.9zM150.1 58.1h4.9v4.9h-4.9zM198.5 58.1h4.9v4.9h-4.9zM474.5 58.1h4.9v4.9h-4.9zM0 62.9h4.9v4.9h-4.9zM14.5 62.9h4.9v4.9h-4.9zM242.1 62.9h4.9v4.9h-4.9zM271.1 62.9h4.9v4.9h-4.9zM295.3 62.9h4.9v4.9h-4.9zM348.6 62.9h4.9v4.9h-4.9zM377.6 62.9h4.9v4.9h-4.9zM440.6 62.9h4.9v4.9h-4.9zM14.5 67.8h4.9v4.9h-4.9zM198.5 67.8h4.9v4.9h-4.9zM416.4 67.8h4.9v4.9h-4.9zM450.3 67.8h4.9v4.9h-4.9zM460 67.8h4.9v4.9h-4.9zM87.1 72.6h4.9v4.9h-4.9zM319.5 72.6h4.9v4.9h-4.9zM377.6 72.6h4.9v4.9h-4.9zM382.5 72.6h4.9v4.9h-4.9zM435.7 72.6h4.9v4.9h-4.9zM33.9 77.5h4.9v4.9h-4.9zM43.6 77.5h4.9v4.9h-4.9zM164.6 77.5h4.9v4.9h-4.9zM188.8 77.5h4.9v4.9h-4.9zM213 77.5h4.9v4.9h-4.9zM377.6 77.5h4.9v4.9h-4.9zM121 82.3h4.9v4.9h-4.9zM135.6 82.3h4.9v4.9h-4.9zM184 82.3h4.9v4.9h-4.9zM213 82.3h4.9v4.9h-4.9zM232.4 82.3h4.9v4.9h-4.9zM256.6 82.3h4.9v4.9h-4.9zM338.9 82.3h4.9v4.9h-4.9zM435.7 82.3h4.9v4.9h-4.9zM101.7 87.1h4.9v4.9h-4.9zM193.7 87.1h4.9v4.9h-4.9zM14.5 92h4.9v4.9h-4.9zM43.6 92h4.9v4.9h-4.9zM203.3 92h4.9v4.9h-4.9zM232.4 92h4.9v4.9h-4.9zM261.4 92h4.9v4.9h-4.9zM295.3 92h4.9v4.9h-4.9zM300.2 92h4.9v4.9h-4.9zM353.4 92h4.9v4.9h-4.9zM363.1 92h4.9v4.9h-4.9zM440.6 92h4.9v4.9h-4.9zM469.6 92h4.9v4.9h-4.9zM222.7 96.8h4.9v4.9h-4.9zM334.1 96.8h4.9v4.9h-4.9zM474.5 96.8h4.9v4.9h-4.9zM77.5 101.7h4.9v4.9h-4.9zM121 101.7h4.9v4.9h-4.9zM169.5 101.7h4.9v4.9h-4.9zM4.8 106.5h4.9v4.9h-4.9zM29 106.5h4.9v4.9h-4.9zM62.9 106.5h4.9v4.9h-4.9zM72.6 106.5h4.9v4.9h-4.9zM135.6 106.5h4.9v4.9h-4.9zM285.7 106.5h4.9v4.9h-4.9zM295.3 106.5h4.9v4.9h-4.9zM295.3 111.4h4.9v4.9h-4.9zM305 111.4h4.9v4.9h-4.9zM392.2 111.4h4.9v4.9h-4.9zM469.6 111.4h4.9v4.9h-4.9zM154.9 116.2h4.9v4.9h-4.9zM208.2 116.2h4.9v4.9h-4.9zM363.1 116.2h4.9v4.9h-4.9zM411.5 116.2h4.9v4.9h-4.9zM62.9 121h4.9v4.9h-4.9zM77.5 121h4.9v4.9h-4.9zM82.3 121h4.9v4.9h-4.9zM121 121h4.9v4.9h-4.9zM363.1 121h4.9v4.9h-4.9zM14.5 125.9h4.9v4.9h-4.9zM154.9 125.9h4.9v4.9h-4.9zM372.8 125.9h4.9v4.9h-4.9zM435.7 125.9h4.9v4.9h-4.9zM101.7 130.7h4.9v4.9h-4.9zM242.1 130.7h4.9v4.9h-4.9zM24.2 135.6h4.9v4.9h-4.9zM43.6 135.6h4.9v4.9h-4.9zM125.9 135.6h4.9v4.9h-4.9zM174.3 135.6h4.9v4.9h-4.9zM261.4 135.6h4.9v4.9h-4.9zM460 135.6h4.9v4.9h-4.9zM33.9 140.4h4.9v4.9h-4.9zM174.3 140.4h4.9v4.9h-4.9zM261.4 140.4h4.9v4.9h-4.9zM290.5 140.4h4.9v4.9h-4.9zM406.7 140.4h4.9v4.9h-4.9zM406.7 145.2h4.9v4.9h-4.9zM377.6 150.1h4.9v4.9h-4.9zM14.5 154.9h4.9v4.9h-4.9zM121 154.9h4.9v4.9h-4.9zM203.3 154.9h4.9v4.9h-4.9zM305 154.9h4.9v4.9h-4.9zM314.7 154.9h4.9v4.9h-4.9zM450.3 154.9h4.9v4.9h-4.9zM87.1 159.8h4.9v4.9h-4.9zM198.5 159.8h4.9v4.9h-4.9zM246.9 159.8h4.9v4.9h-4.9zM309.9 159.8h4.9v4.9h-4.9zM392.2 159.8h4.9v4.9h-4.9zM416.4 159.8h4.9v4.9h-4.9zM469.6 159.8h4.9v4.9h-4.9zM479.3 159.8h4.9v4.9h-4.9zM0 164.6h4.9v4.9h-4.9zM77.5 164.6h4.9v4.9h-4.9zM251.8 164.6h4.9v4.9h-4.9zM290.5 164.6h4.9v4.9h-4.9zM334.1 164.6h4.9v4.9h-4.9zM411.5 164.6h4.9v4.9h-4.9zM460 164.6h4.9v4.9h-4.9zM33.9 169.5h4.9v4.9h-4.9zM101.7 169.5h4.9v4.9h-4.9zM125.9 169.5h4.9v4.9h-4.9zM217.9 169.5h4.9v4.9h-4.9zM222.7 169.5h4.9v4.9h-4.9zM237.2 169.5h4.9v4.9h-4.9zM276 169.5h4.9v4.9h-4.9zM406.7 169.5h4.9v4.9h-4.9zM464.8 169.5h4.9v4.9h-4.9zM0 174.3h4.9v4.9h-4.9zM237.2 174.3h4.9v4.9h-4.9zM455.1 174.3h4.9v4.9h-4.9zM82.3 179.1h4.9v4.9h-4.9zM92 179.1h4.9v4.9h-4.9zM290.5 179.1h4.9v4.9h-4.9zM295.3 179.1h4.9v4.9h-4.9zM106.5 184h4.9v4.9h-4.9zM130.7 184h4.9v4.9h-4.9zM145.2 184h4.9v4.9h-4.9zM184 184h4.9v4.9h-4.9zM348.6 184h4.9v4.9h-4.9zM411.5 184h4.9v4.9h-4.9zM38.7 188.8h4.9v4.9h-4.9zM82.3 188.8h4.9v4.9h-4.9zM92 188.8h4.9v4.9h-4.9zM208.2 188.8h4.9v4.9h-4.9zM232.4 188.8h4.9v4.9h-4.9zM251.8 188.8h4.9v4.9h-4.9zM353.4 188.8h4.9v4.9h-4.9zM421.2 188.8h4.9v4.9h-4.9zM479.3 188.8h4.9v4.9h-4.9zM87.1 193.7h4.9v4.9h-4.9zM130.7 193.7h4.9v4.9h-4.9zM329.2 193.7h4.9v4.9h-4.9zM363.1 193.7h4.9v4.9h-4.9zM377.6 193.7h4.9v4.9h-4.9zM464.8 193.7h4.9v4.9h-4.9zM53.3 198.5h4.9v4.9h-4.9zM135.6 198.5h4.9v4.9h-4.9zM154.9 198.5h4.9v4.9h-4.9zM174.3 198.5h4.9v4.9h-4.9zM222.7 198.5h4.9v4.9h-4.9zM309.9 198.5h4.9v4.9h-4.9zM382.5 198.5h4.9v4.9h-4.9zM392.2 198.5h4.9v4.9h-4.9zM430.9 198.5h4.9v4.9h-4.9zM9.7 203.3h4.9v4.9h-4.9zM125.9 203.3h4.9v4.9h-4.9zM145.2 203.3h4.9v4.9h-4.9zM159.8 203.3h4.9v4.9h-4.9zM242.1 203.3h4.9v4.9h-4.9zM295.3 203.3h4.9v4.9h-4.9zM324.4 203.3h4.9v4.9h-4.9zM450.3 203.3h4.9v4.9h-4.9zM455.1 203.3h4.9v4.9h-4.9zM290.5 208.2h4.9v4.9h-4.9zM343.8 208.2h4.9v4.9h-4.9zM464.8 208.2h4.9v4.9h-4.9zM9.7 213h4.9v4.9h-4.9zM72.6 213h4.9v4.9h-4.9zM154.9 213h4.9v4.9h-4.9zM188.8 213h4.9v4.9h-4.9zM227.6 213h4.9v4.9h-4.9zM338.9 213h4.9v4.9h-4.9zM24.2 217.9h4.9v4.9h-4.9zM154.9 217.9h4.9v4.9h-4.9zM256.6 217.9h4.9v4.9h-4.9zM416.4 217.9h4.9v4.9h-4.9zM4.8 222.7h4.9v4.9h-4.9zM14.5 222.7h4.9v4.9h-4.9zM174.3 222.7h4.9v4.9h-4.9zM305 222.7h4.9v4.9h-4.9zM314.7 222.7h4.9v4.9h-4.9zM353.4 222.7h4.9v4.9h-4.9zM460 222.7h4.9v4.9h-4.9zM9.7 227.6h4.9v4.9h-4.9zM222.7 227.6h4.9v4.9h-4.9zM290.5 227.6h4.9v4.9h-4.9zM348.6 227.6h4.9v4.9h-4.9zM358.3 227.6h4.9v4.9h-4.9zM382.5 227.6h4.9v4.9h-4.9zM479.3 227.6h4.9v4.9h-4.9zM82.3 232.4h4.9v4.9h-4.9zM87.1 232.4h4.9v4.9h-4.9zM193.7 232.4h4.9v4.9h-4.9zM232.4 232.4h4.9v4.9h-4.9zM329.2 232.4h4.9v4.9h-4.9zM372.8 232.4h4.9v4.9h-4.9zM9.7 237.2h4.9v4.9h-4.9zM92 237.2h4.9v4.9h-4.9zM159.8 237.2h4.9v4.9h-4.9zM246.9 237.2h4.9v4.9h-4.9zM251.8 237.2h4.9v4.9h-4.9zM266.3 237.2h4.9v4.9h-4.9zM314.7 237.2h4.9v4.9h-4.9zM329.2 237.2h4.9v4.9h-4.9zM368 237.2h4.9v4.9h-4.9zM377.6 237.2h4.9v4.9h-4.9zM460 237.2h4.9v4.9h-4.9zM33.9 242.1h4.9v4.9h-4.9zM58.1 242.1h4.9v4.9h-4.9zM82.3 242.1h4.9v4.9h-4.9zM116.2 242.1h4.9v4.9h-4.9zM464.8 242.1h4.9v4.9h-4.9zM242.1 246.9h4.9v4.9h-4.9zM285.7 246.9h4.9v4.9h-4.9zM353.4 246.9h4.9v4.9h-4.9zM464.8 246.9h4.9v4.9h-4.9zM474.5 246.9h4.9v4.9h-4.9zM227.6 251.8h4.9v4.9h-4.9zM242.1 251.8h4.9v4.9h-4.9zM329.2 251.8h4.9v4.9h-4.9zM280.8 256.6h4.9v4.9h-4.9zM348.6 256.6h4.9v4.9h-4.9zM397 256.6h4.9v4.9h-4.9zM474.5 256.6h4.9v4.9h-4.9zM150.1 261.4h4.9v4.9h-4.9zM179.1 261.4h4.9v4.9h-4.9zM184 261.4h4.9v4.9h-4.9zM416.4 261.4h4.9v4.9h-4.9zM460 261.4h4.9v4.9h-4.9zM203.3 266.3h4.9v4.9h-4.9zM38.7 271.1h4.9v4.9h-4.9zM58.1 271.1h4.9v4.9h-4.9zM159.8 271.1h4.9v4.9h-4.9zM300.2 271.1h4.9v4.9h-4.9zM353.4 271.1h4.9v4.9h-4.9zM372.8 271.1h4.9v4.9h-4.9zM460 271.1h4.9v4.9h-4.9zM145.2 276h4.9v4.9h-4.9zM290.5 276h4.9v4.9h-4.9zM305 276h4.9v4.9h-4.9zM426.1 276h4.9v4.9h-4.9zM479.3 276h4.9v4.9h-4.9zM484.2 276h4.9v4.9h-4.9zM33.9 280.8h4.9v4.9h-4.9zM198.5 280.8h4.9v4.9h-4.9zM246.9 280.8h4.9v4.9h-4.9zM397 280.8h4.9v4.9h-4.9zM411.5 280.8h4.9v4.9h-4.9zM0 285.7h4.9v4.9h-4.9zM29 285.7h4.9v4.9h-4.9zM62.9 285.7h4.9v4.9h-4.9zM169.5 285.7h4.9v4.9h-4.9zM392.2 285.7h4.9v4.9h-4.9zM421.2 285.7h4.9v4.9h-4.9zM14.5 290.5h4.9v4.9h-4.9zM24.2 290.5h4.9v4.9h-4.9zM67.8 290.5h4.9v4.9h-4.9zM87.1 290.5h4.9v4.9h-4.9zM184 290.5h4.9v4.9h-4.9zM237.2 290.5h4.9v4.9h-4.9zM53.3 295.3h4.9v4.9h-4.9zM203.3 295.3h4.9v4.9h-4.9zM300.2 295.3h4.9v4.9h-4.9zM329.2 295.3h4.9v4.9h-4.9zM368 295.3h4.9v4.9h-4.9zM392.2 295.3h4.9v4.9h-4.9zM430.9 295.3h4.9v4.9h-4.9zM159.8 300.2h4.9v4.9h-4.9zM9.7 305h4.9v4.9h-4.9zM38.7 305h4.9v4.9h-4.9zM43.6 305h4.9v4.9h-4.9zM276 305h4.9v4.9h-4.9zM358.3 305h4.9v4.9h-4.9zM372.8 305h4.9v4.9h-4.9zM382.5 305h4.9v4.9h-4.9zM401.9 305h4.9v4.9h-4.9zM435.7 305h4.9v4.9h-4.9zM479.3 305h4.9v4.9h-4.9zM53.3 309.9h4.9v4.9h-4.9zM58.1 309.9h4.9v4.9h-4.9zM62.9 309.9h4.9v4.9h-4.9zM184 309.9h4.9v4.9h-4.9zM213 309.9h4.9v4.9h-4.9zM430.9 309.9h4.9v4.9h-4.9zM67.8 314.7h4.9v4.9h-4.9zM121 314.7h4.9v4.9h-4.9zM266.3 314.7h4.9v4.9h-4.9zM353.4 314.7h4.9v4.9h-4.9zM358.3 314.7h4.9v4.9h-4.9zM58.1 319.5h4.9v4.9h-4.9zM266.3 319.5h4.9v4.9h-4.9zM285.7 319.5h4.9v4.9h-4.9zM338.9 319.5h4.9v4.9h-4.9zM368 319.5h4.9v4.9h-4.9zM397 319.5h4.9v4.9h-4.9zM130.7 324.4h4.9v4.9h-4.9zM358.3 324.4h4.9v4.9h-4.9zM435.7 324.4h4.9v4.9h-4.9zM19.4 329.2h4.9v4.9h-4.9zM87.1 329.2h4.9v4.9h-4.9zM222.7 329.2h4.9v4.9h-4.9zM227.6 329.2h4.9v4.9h-4.9zM276 329.2h4.9v4.9h-4.9zM421.2 329.2h4.9v4.9h-4.9zM484.2 329.2h4.9v4.9h-4.9zM24.2 334.1h4.9v4.9h-4.9zM29 334.1h4.9v4.9h-4.9zM53.3 334.1h4.9v4.9h-4.9zM67.8 334.1h4.9v4.9h-4.9zM92 334.1h4.9v4.9h-4.9zM96.8 334.1h4.9v4.9h-4.9zM125.9 334.1h4.9v4.9h-4.9zM213 334.1h4.9v4.9h-4.9zM237.2 334.1h4.9v4.9h-4.9zM411.5 334.1h4.9v4.9h-4.9zM150.1 338.9h4.9v4.9h-4.9zM179.1 338.9h4.9v4.9h-4.9zM266.3 338.9h4.9v4.9h-4.9zM455.1 338.9h4.9v4.9h-4.9zM67.8 343.8h4.9v4.9h-4.9zM106.5 343.8h4.9v4.9h-4.9zM324.4 343.8h4.9v4.9h-4.9zM397 343.8h4.9v4.9h-4.9zM174.3 348.6h4.9v4.9h-4.9zM363.1 348.6h4.9v4.9h-4.9zM411.5 348.6h4.9v4.9h-4.9zM416.4 348.6h4.9v4.9h-4.9zM19.4 353.4h4.9v4.9h-4.9zM111.4 353.4h4.9v4.9h-4.9zM174.3 353.4h4.9v4.9h-4.9zM188.8 353.4h4.9v4.9h-4.9zM217.9 353.4h4.9v4.9h-4.9zM290.5 353.4h4.9v4.9h-4.9zM455.1 353.4h4.9v4.9h-4.9zM43.6 358.3h4.9v4.9h-4.9zM53.3 358.3h4.9v4.9h-4.9zM96.8 358.3h4.9v4.9h-4.9zM140.4 358.3h4.9v4.9h-4.9zM208.2 358.3h4.9v4.9h-4.9zM290.5 358.3h4.9v4.9h-4.9zM295.3 358.3h4.9v4.9h-4.9zM372.8 358.3h4.9v4.9h-4.9zM484.2 358.3h4.9v4.9h-4.9zM154.9 363.1h4.9v4.9h-4.9zM290.5 363.1h4.9v4.9h-4.9zM484.2 363.1h4.9v4.9h-4.9zM77.5 368h4.9v4.9h-4.9zM101.7 368h4.9v4.9h-4.9zM184 368h4.9v4.9h-4.9zM479.3 368h4.9v4.9h-4.9zM0 372.8h4.9v4.9h-4.9zM33.9 372.8h4.9v4.9h-4.9zM53.3 372.8h4.9v4.9h-4.9zM77.5 372.8h4.9v4.9h-4.9zM164.6 372.8h4.9v4.9h-4.9zM203.3 372.8h4.9v4.9h-4.9zM217.9 372.8h4.9v4.9h-4.9zM305 372.8h4.9v4.9h-4.9zM343.8 372.8h4.9v4.9h-4.9zM392.2 372.8h4.9v4.9h-4.9zM460 372.8h4.9v4.9h-4.9zM198.5 377.6h4.9v4.9h-4.9zM266.3 377.6h4.9v4.9h-4.9zM271.1 377.6h4.9v4.9h-4.9zM280.8 377.6h4.9v4.9h-4.9zM300.2 377.6h4.9v4.9h-4.9zM479.3 377.6h4.9v4.9h-4.9zM43.6 382.5h4.9v4.9h-4.9zM135.6 382.5h4.9v4.9h-4.9zM213 382.5h4.9v4.9h-4.9zM261.4 382.5h4.9v4.9h-4.9zM266.3 382.5h4.9v4.9h-4.9zM392.2 382.5h4.9v4.9h-4.9zM87.1 387.3h4.9v4.9h-4.9zM101.7 387.3h4.9v4.9h-4.9zM348.6 387.3h4.9v4.9h-4.9zM358.3 387.3h4.9v4.9h-4.9zM426.1 387.3h4.9v4.9h-4.9zM179.1 392.2h4.9v4.9h-4.9zM300.2 392.2h4.9v4.9h-4.9zM387.3 392.2h4.9v4.9h-4.9zM440.6 392.2h4.9v4.9h-4.9zM455.1 392.2h4.9v4.9h-4.9zM9.7 397h4.9v4.9h-4.9zM164.6 397h4.9v4.9h-4.9zM174.3 397h4.9v4.9h-4.9zM348.6 397h4.9v4.9h-4.9zM474.5 397h4.9v4.9h-4.9zM256.6 401.9h4.9v4.9h-4.9zM426.1 401.9h4.9v4.9h-4.9zM455.1 401.9h4.9v4.9h-4.9zM474.5 401.9h4.9v4.9h-4.9zM53.3 406.7h4.9v4.9h-4.9zM343.8 406.7h4.9v4.9h-4.9zM48.4 411.5h4.9v4.9h-4.9zM82.3 411.5h4.9v4.9h-4.9zM92 411.5h4.9v4.9h-4.9zM208.2 411.5h4.9v4.9h-4.9zM232.4 411.5h4.9v4.9h-4.9zM368 411.5h4.9v4.9h-4.9zM372.8 411.5h4.9v4.9h-4.9zM387.3 411.5h4.9v4.9h-4.9zM455.1 411.5h4.9v4.9h-4.9zM469.6 411.5h4.9v4.9h-4.9zM106.5 416.4h4.9v4.9h-4.9zM121 416.4h4.9v4.9h-4.9zM125.9 416.4h4.9v4.9h-4.9zM198.5 416.4h4.9v4.9h-4.9zM353.4 416.4h4.9v4.9h-4.9zM358.3 416.4h4.9v4.9h-4.9zM474.5 416.4h4.9v4.9h-4.9zM58.1 421.2h4.9v4.9h-4.9zM62.9 421.2h4.9v4.9h-4.9zM116.2 421.2h4.9v4.9h-4.9zM154.9 421.2h4.9v4.9h-4.9zM169.5 421.2h4.9v4.9h-4.9zM203.3 421.2h4.9v4.9h-4.9zM213 421.2h4.9v4.9h-4.9zM0 426.1h4.9v4.9h-4.9zM38.7 426.1h4.9v4.9h-4.9zM77.5 426.1h4.9v4.9h-4.9zM193.7 426.1h4.9v4.9h-4.9zM232.4 426.1h4.9v4.9h-4.9zM324.4 426.1h4.9v4.9h-4.9zM401.9 426.1h4.9v4.9h-4.9zM426.1 426.1h4.9v4.9h-4.9zM430.9 426.1h4.9v4.9h-4.9zM19.4 430.9h4.9v4.9h-4.9zM24.2 430.9h4.9v4.9h-4.9zM145.2 430.9h4.9v4.9h-4.9zM184 430.9h4.9v4.9h-4.9zM213 430.9h4.9v4.9h-4.9zM237.2 430.9h4.9v4.9h-4.9zM280.8 430.9h4.9v4.9h-4.9zM397 430.9h4.9v4.9h-4.9zM38.7 435.7h4.9v4.9h-4.9zM48.4 435.7h4.9v4.9h-4.9zM387.3 435.7h4.9v4.9h-4.9zM479.3 435.7h4.9v4.9h-4.9zM159.8 440.6h4.9v4.9h-4.9zM295.3 440.6h4.9v4.9h-4.9zM377.6 440.6h4.9v4.9h-4.9zM440.6 440.6h4.9v4.9h-4.9zM184 445.4h4.9v4.9h-4.9zM290.5 445.4h4.9v4.9h-4.9zM319.5 445.4h4.9v4.9h-4.9zM329.2 445.4h4.9v4.9h-4.9zM377.6 445.4h4.9v4.9h-4.9zM387.3 445.4h4.9v4.9h-4.9zM392.2 445.4h4.9v4.9h-4.9zM62.9 450.3h4.9v4.9h-4.9zM92 450.3h4.9v4.9h-4.9zM111.4 450.3h4.9v4.9h-4.9zM135.6 450.3h4.9v4.9h-4.9zM285.7 450.3h4.9v4.9h-4.9zM305 450.3h4.9v4.9h-4.9zM368 450.3h4.9v4.9h-4.9zM261.4 455.1h4.9v4.9h-4.9zM295.3 455.1h4.9v4.9h-4.9zM305 455.1h4.9v4.9h-4.9zM460 455.1h4.9v4.9h-4.9zM464.8 455.1h4.9v4.9h-4.9zM77.5 460h4.9v4.9h-4.9zM474.5 460h4.9v4.9h-4.9zM62.9 464.8h4.9v4.9h-4.9zM295.3 464.8h4.9v4.9h-4.9zM314.7 464.8h4.9v4.9h-4.9zM406.7 464.8h4.9v4.9h-4.9zM87.1 469.6h4.9v4.9h-4.9zM290.5 469.6h4.9v4.9h-4.9zM334.1 469.6h4.9v4.9h-4.9zM445.4 469.6h4.9v4.9h-4.9zM29 474.5h4.9v4.9h-4.9zM82.3 474.5h4.9v4.9h-4.9zM135.6 474.5h4.9v4.9h-4.9zM169.5 474.5h4.9v4.9h-4.9zM276 474.5h4.9v4.9h-4.9zM406.7 474.5h4.9v4.9h-4.9zM479.3 474.5h4.9v4.9h-4.9zM164.6 479.3h4.9v4.9h-4.9zM222.7 479.3h4.9v4.9h-4.9zM334.1 479.3h4.9v4.9h-4.9zM387.3 484.2h4.9v4.9h-4.9zM464.8 484.2h4.9v4.9h-4.9z"/>
<path fill="#0000a7" d="M353.4 0h4.9v4.9h-4.9zM203.3 4.8h4.9v4.9h-4.9zM416.4 4.8h4.9v4.9h-4.9zM33.9 14.5h4.9v4.9h-4.9zM116.2 14.5h4.9v4.9h-4.9zM256.6 24.2h4.9v4.9h-4.9zM4.8 29h4.9v4.9h-4.9zM125.9 33.9h4.9v4.9h-4.9zM43.6 38.7h4.9v4.9h-4.9zM179.1 38.7h4.9v4.9h-4.9zM203.3 38.7h4.9v4.9h-4.9zM469.6 38.7h4.9v4.9h-4.9zM455.1 43.6h4.9v4.9h-4.9zM169.5 48.4h4.9v4.9h-4.9zM193.7 48.4h4.9v4.9h-4.9zM33.9 82.3h4.9v4.9h-4.9zM87.1 82.3h4.9v4.9h-4.9zM261.4 82.3h4.9v4.9h-4.9zM319.5 82.3h4.9v4.9h-4.9zM150.1 87.1h4.9v4.9h-4.9zM154.9 87.1h4.9v4.9h-4.9zM159.8 96.8h4.9v4.9h-4.9zM38.7 101.7h4.9v4.9h-4.9zM140.4 101.7h4.9v4.9h-4.9zM203.3 101.7h4.9v4.9h-4.9zM261.4 101.7h4.9v4.9h-4.9zM348.6 101.7h4.9v4.9h-4.9zM135.6 116.2h4.9v4.9h-4.9zM334.1 121h4.9v4.9h-4.9zM324.4 125.9h4.9v4.9h-4.9zM377.6 125.9h4.9v4.9h-4.9zM9.7 130.7h4.9v4.9h-4.9zM135.6 130.7h4.9v4.9h-4.9zM392.2 130.7h4.9v4.9h-4.9zM77.5 135.6h4.9v4.9h-4.9zM314.7 135.6h4.9v4.9h-4.9zM440.6 135.6h4.9v4.9h-4.9zM87.1 140.4h4.9v4.9h-4.9zM314.7 140.4h4.9v4.9h-4.9zM435.7 140.4h4.9v4.9h-4.9zM188.8 145.2h4.9v4.9h-4.9zM150.1 150.1h4.9v4.9h-4.9zM184 150.1h4.9v4.9h-4.9zM198.5 154.9h4.9v4.9h-4.9zM314.7 159.8h4.9v4.9h-4.9zM300.2 164.6h4.9v4.9h-4.9zM445.4 174.3h4.9v4.9h-4.9zM464.8 174.3h4.9v4.9h-4.9zM159.8 179.1h4.9v4.9h-4.9zM222.7 179.1h4.9v4.9h-4.9zM62.9 184h4.9v4.9h-4.9zM106.5 188.8h4.9v4.9h-4.9zM290.5 188.8h4.9v4.9h-4.9zM184 198.5h4.9v4.9h-4.9zM208.2 198.5h4.9v4.9h-4.9zM435.7 203.3h4.9v4.9h-4.9zM261.4 213h4.9v4.9h-4.9zM430.9 213h4.9v4.9h-4.9zM348.6 217.9h4.9v4.9h-4.9zM421.2 217.9h4.9v4.9h-4.9zM217.9 222.7h4.9v4.9h-4.9zM387.3 227.6h4.9v4.9h-4.9zM135.6 232.4h4.9v4.9h-4.9zM334.1 232.4h4.9v4.9h-4.9zM406.7 232.4h4.9v4.9h-4.9zM430.9 237.2h4.9v4.9h-4.9zM121 242.1h4.9v4.9h-4.9zM125.9 242.1h4.9v4.9h-4.9zM140.4 246.9h4.9v4.9h-4.9zM193.7 246.9h4.9v4.9h-4.9zM435.7 246.9h4.9v4.9h-4.9zM92 256.6h4.9v4.9h-4.9zM150.1 256.6h4.9v4.9h-4.9zM217.9 256.6h4.9v4.9h-4.9zM324.4 261.4h4.9v4.9h-4.9zM14.5 271.1h4.9v4.9h-4.9zM300.2 276h4.9v4.9h-4.9zM329.2 276h4.9v4.9h-4.9zM4.8 280.8h4.9v4.9h-4.9zM256.6 280.8h4.9v4.9h-4.9zM4.8 285.7h4.9v4.9h-4.9zM125.9 285.7h4.9v4.9h-4.9zM266.3 285.7h4.9v4.9h-4.9zM368 285.7h4.9v4.9h-4.9zM106.5 295.3h4.9v4.9h-4.9zM232.4 295.3h4.9v4.9h-4.9zM266.3 300.2h4.9v4.9h-4.9zM276 300.2h4.9v4.9h-4.9zM140.4 309.9h4.9v4.9h-4.9zM203.3 309.9h4.9v4.9h-4.9zM314.7 309.9h4.9v4.9h-4.9zM213 314.7h4.9v4.9h-4.9zM140.4 329.2h4.9v4.9h-4.9zM266.3 329.2h4.9v4.9h-4.9zM43.6 334.1h4.9v4.9h-4.9zM193.7 334.1h4.9v4.9h-4.9zM445.4 334.1h4.9v4.9h-4.9zM101.7 338.9h4.9v4.9h-4.9zM140.4 338.9h4.9v4.9h-4.9zM368 338.9h4.9v4.9h-4.9zM92 343.8h4.9v4.9h-4.9zM135.6 343.8h4.9v4.9h-4.9zM154.9 343.8h4.9v4.9h-4.9zM387.3 348.6h4.9v4.9h-4.9zM479.3 348.6h4.9v4.9h-4.9zM484.2 348.6h4.9v4.9h-4.9zM324.4 358.3h4.9v4.9h-4.9zM33.9 363.1h4.9v4.9h-4.9zM319.5 368h4.9v4.9h-4.9zM280.8 372.8h4.9v4.9h-4.9zM116.2 382.5h4.9v4.9h-4.9zM338.9 387.3h4.9v4.9h-4.9zM295.3 392.2h4.9v4.9h-4.9zM150.1 397h4.9v4.9h-4.9zM213 397h4.9v4.9h-4.9zM353.4 397h4.9v4.9h-4.9zM222.7 401.9h4.9v4.9h-4.9zM406.7 406.7h4.9v4.9h-4.9zM184 411.5h4.9v4.9h-4.9zM280.8 411.5h4.9v4.9h-4.9zM111.4 416.4h4.9v4.9h-4.9zM290.5 416.4h4.9v4.9h-4.9zM411.5 416.4h4.9v4.9h-4.9zM353.4 421.2h4.9v4.9h-4.9zM121 430.9h4.9v4.9h-4.9zM159.8 430.9h4.9v4.9h-4.9zM271.1 430.9h4.9v4.9h-4.9zM455.1 430.9h4.9v4.9h-4.9zM116.2 435.7h4.9v4.9h-4.9zM159.8 435.7h4.9v4.9h-4.9zM213 435.7h4.9v4.9h-4.9zM464.8 445.4h4.9v4.9h-4.9zM213 450.3h4.9v4.9h-4.9zM276 450.3h4.9v4.9h-4.9zM58.1 455.1h4.9v4.9h-4.9zM101.7 455.1h4.9v4.9h-4.9zM179.1 455.1h4.9v4.9h-4.9zM474.5 455.1h4.9v4.9h-4.9zM237.2 464.8h4.9v4.9h-4.9zM377.6 464.8h4.9v4.9h-4.9zM43.6 474.5h4.9v4.9h-4.9zM174.3 474.5h4.9v4.9h-4.9zM445.4 474.5h4.9v4.9h-4.9zM484.2 474.5h4.9v4.9h-4.9zM242.1 479.3h4.9v4.9h-4.9z"/>

<rect x="193.66" y="242.08" width="4.9" height="4.84" fill="#8f0000"/><rect x="198.5" y="242.08" width="4.9" height="4.84" fill="#970000"/><rect x="203.35" y="242.08" width="4.9" height="4.84" fill="#8b0000"/><rect x="208.19" y="242.08" width="4.9" height="4.84" fill="#9f0000"/><rect x="213.03" y="242.08" width="4.9" height="4.84" fill="#930000"/><rect x="217.87" y="242.08" width="4.9" height="4.84" fill="#8b0000"/><rect x="222.71" y="242.08" width="4.9" height="4.84" fill="#8f0000"/><rect x="227.55" y="242.08" width="4.9" height="4.84" fill="#a30000"/><rect x="232.4" y="242.08" width="4.9" height="4.84" fill="#930000"/><rect x="237.24" y="242.08" width="4.9" height="4.84" fill="#8b0000"/><rect x="242.08" y="242.08" width="4.9" height="4.84" fill="#970000"/><rect x="246.92" y="242.08" width="4.9" height="4.84" fill="#8f0000"/><rect x="251.76" y="242.08" width="4.9" height="4.84" fill="#8b0000"/><rect x="256.6" y="242.08" width="4.9" height="4.84" fill="#8f0000"/><rect x="261.45" y="242.08" width="4.9" height="4.84" fill="#930000"/><rect x="266.29" y="242.08" width="4.9" height="4.84" fill="#970000"/><rect x="271.13" y="242.08" width="4.9" height="4.84" fill="#9b0000"/><rect x="275.97" y="242.08" width="4.9" height="4.84" fill="#8f0000"/><rect x="280.81" y="242.08" width="4.9" height="4.84" fill="#8b0000"/><rect x="285.65" y="242.08" width="4.9" height="4.84" fill="#8f0000"/><rect x="290.5" y="242.08" width="4.9" height="4.84" fill="#8b0000"/>
</g>
<g stroke="#262626" stroke-opacity="0.15" stroke-width="1" fill="none"><path d="M2.42 0V489 M0 2.42H489"/><path d="M50.84 0V489 M0 50.84H489"/><path d="M99.25 0V489 M0 99.25H489"/><path d="M147.67 0V489 M0 147.67H489"/><path d="M196.08 0V489 M0 196.08H489"/><path d="M244.5 0V489 M0 244.5H489"/><path d="M292.92 0V489 M0 292.92H489"/><path d="M341.33 0V489 M0 341.33H489"/><path d="M389.75 0V489 M0 389.75H489"/><path d="M438.16 0V489 M0 438.16H489"/><path d="M486.58 0V489 M0 486.58H489"/></g>
<g stroke="#262626" stroke-opacity="0.85" stroke-width="1" fill="none"><path d="M2.42 1v3.9 M2.42 488v-3.9 M1 2.42h3.9 M488 2.42h-3.9"/><path d="M50.84 1v3.9 M50.84 488v-3.9 M1 50.84h3.9 M488 50.84h-3.9"/><path d="M99.25 1v3.9 M99.25 488v-3.9 M1 99.25h3.9 M488 99.25h-3.9"/><path d="M147.67 1v3.9 M147.67 488v-3.9 M1 147.67h3.9 M488 147.67h-3.9"/><path d="M196.08 1v3.9 M196.08 488v-3.9 M1 196.08h3.9 M488 196.08h-3.9"/><path d="M244.5 1v3.9 M244.5 488v-3.9 M1 244.5h3.9 M488 244.5h-3.9"/><path d="M292.92 1v3.9 M292.92 488v-3.9 M1 292.92h3.9 M488 292.92h-3.9"/><path d="M341.33 1v3.9 M341.33 488v-3.9 M1 341.33h3.9 M488 341.33h-3.9"/><path d="M389.75 1v3.9 M389.75 488v-3.9 M1 389.75h3.9 M488 389.75h-3.9"/><path d="M438.16 1v3.9 M438.16 488v-3.9 M1 438.16h3.9 M488 438.16h-3.9"/><path d="M486.58 1v3.9 M486.58 488v-3.9 M1 486.58h3.9 M488 486.58h-3.9"/></g>
<rect x="0.5" y="0.5" width="488" height="488" stroke="#262626" fill="none" shape-rendering="crispEdges"/>
</svg>
<!-- colorbar -->
<svg class="a" style="left:645px;top:125px" width="24" height="491" viewBox="-1 -1 24 491">
<defs><linearGradient id="jet" x1="0" y1="1" x2="0" y2="0">
<stop offset="0" stop-color="#000083"/><stop offset="0.125" stop-color="#0000ff"/><stop offset="0.375" stop-color="#00ffff"/><stop offset="0.625" stop-color="#ffff00"/><stop offset="0.875" stop-color="#ff0000"/><stop offset="1" stop-color="#800000"/>
</linearGradient></defs>
<g shape-rendering="crispEdges">
<rect x="-1" y="-1" width="24" height="491" fill="#ffffff"/>
<rect x="0.5" y="0.5" width="21" height="488" fill="url(#jet)" stroke="#262626"/>
</g>
<path d="M21 49.14h-3.6M21 97.98h-3.6M21 146.82h-3.6M21 195.66h-3.6M21 244.5h-3.6M21 293.34h-3.6M21 342.18h-3.6M21 391.02h-3.6M21 439.86h-3.6" stroke="#262626" fill="none"/>
</svg>
<div class="xt" style="left:122.2px">0</div><div class="yt" style="top:120.4px">0</div><div class="ct" style="top:119.7px">1</div><div class="xt" style="left:170.6px">0.1</div><div class="yt" style="top:168.9px">0.1</div><div class="ct" style="top:168.5px">0.9</div><div class="xt" style="left:219.1px">0.2</div><div class="yt" style="top:217.3px">0.2</div><div class="ct" style="top:217.4px">0.8</div><div class="xt" style="left:267.5px">0.3</div><div class="yt" style="top:265.8px">0.3</div><div class="ct" style="top:266.2px">0.7</div><div class="xt" style="left:316.0px">0.4</div><div class="yt" style="top:314.2px">0.4</div><div class="ct" style="top:315.1px">0.6</div><div class="xt" style="left:364.4px">0.5</div><div class="yt" style="top:362.7px">0.5</div><div class="ct" style="top:363.9px">0.5</div><div class="xt" style="left:412.8px">0.6</div><div class="yt" style="top:411.2px">0.6</div><div class="ct" style="top:412.7px">0.4</div><div class="xt" style="left:461.3px">0.7</div><div class="yt" style="top:459.6px">0.7</div><div class="ct" style="top:461.6px">0.3</div><div class="xt" style="left:509.7px">0.8</div><div class="yt" style="top:508.1px">0.8</div><div class="ct" style="top:510.4px">0.2</div><div class="xt" style="left:558.2px">0.9</div><div class="yt" style="top:556.5px">0.9</div><div class="ct" style="top:559.3px">0.1</div><div class="xt" style="left:606.6px">1</div><div class="yt" style="top:605.0px">1</div><div class="ct" style="top:608.1px">0</div>
<div class="a" style="left:365px;top:642px;-webkit-text-stroke:0.25px #262626;width:40px;text-align:center;font-size:16.13px;line-height:20px;color:#262626;">x</div>
<div class="a" style="left:80.1px;top:361px;-webkit-text-stroke:0.25px #262626;width:40px;height:20px;text-align:center;font-size:15px;line-height:20px;color:#262626;transform:rotate(-90deg);">y</div>
</div>
</body></html>
